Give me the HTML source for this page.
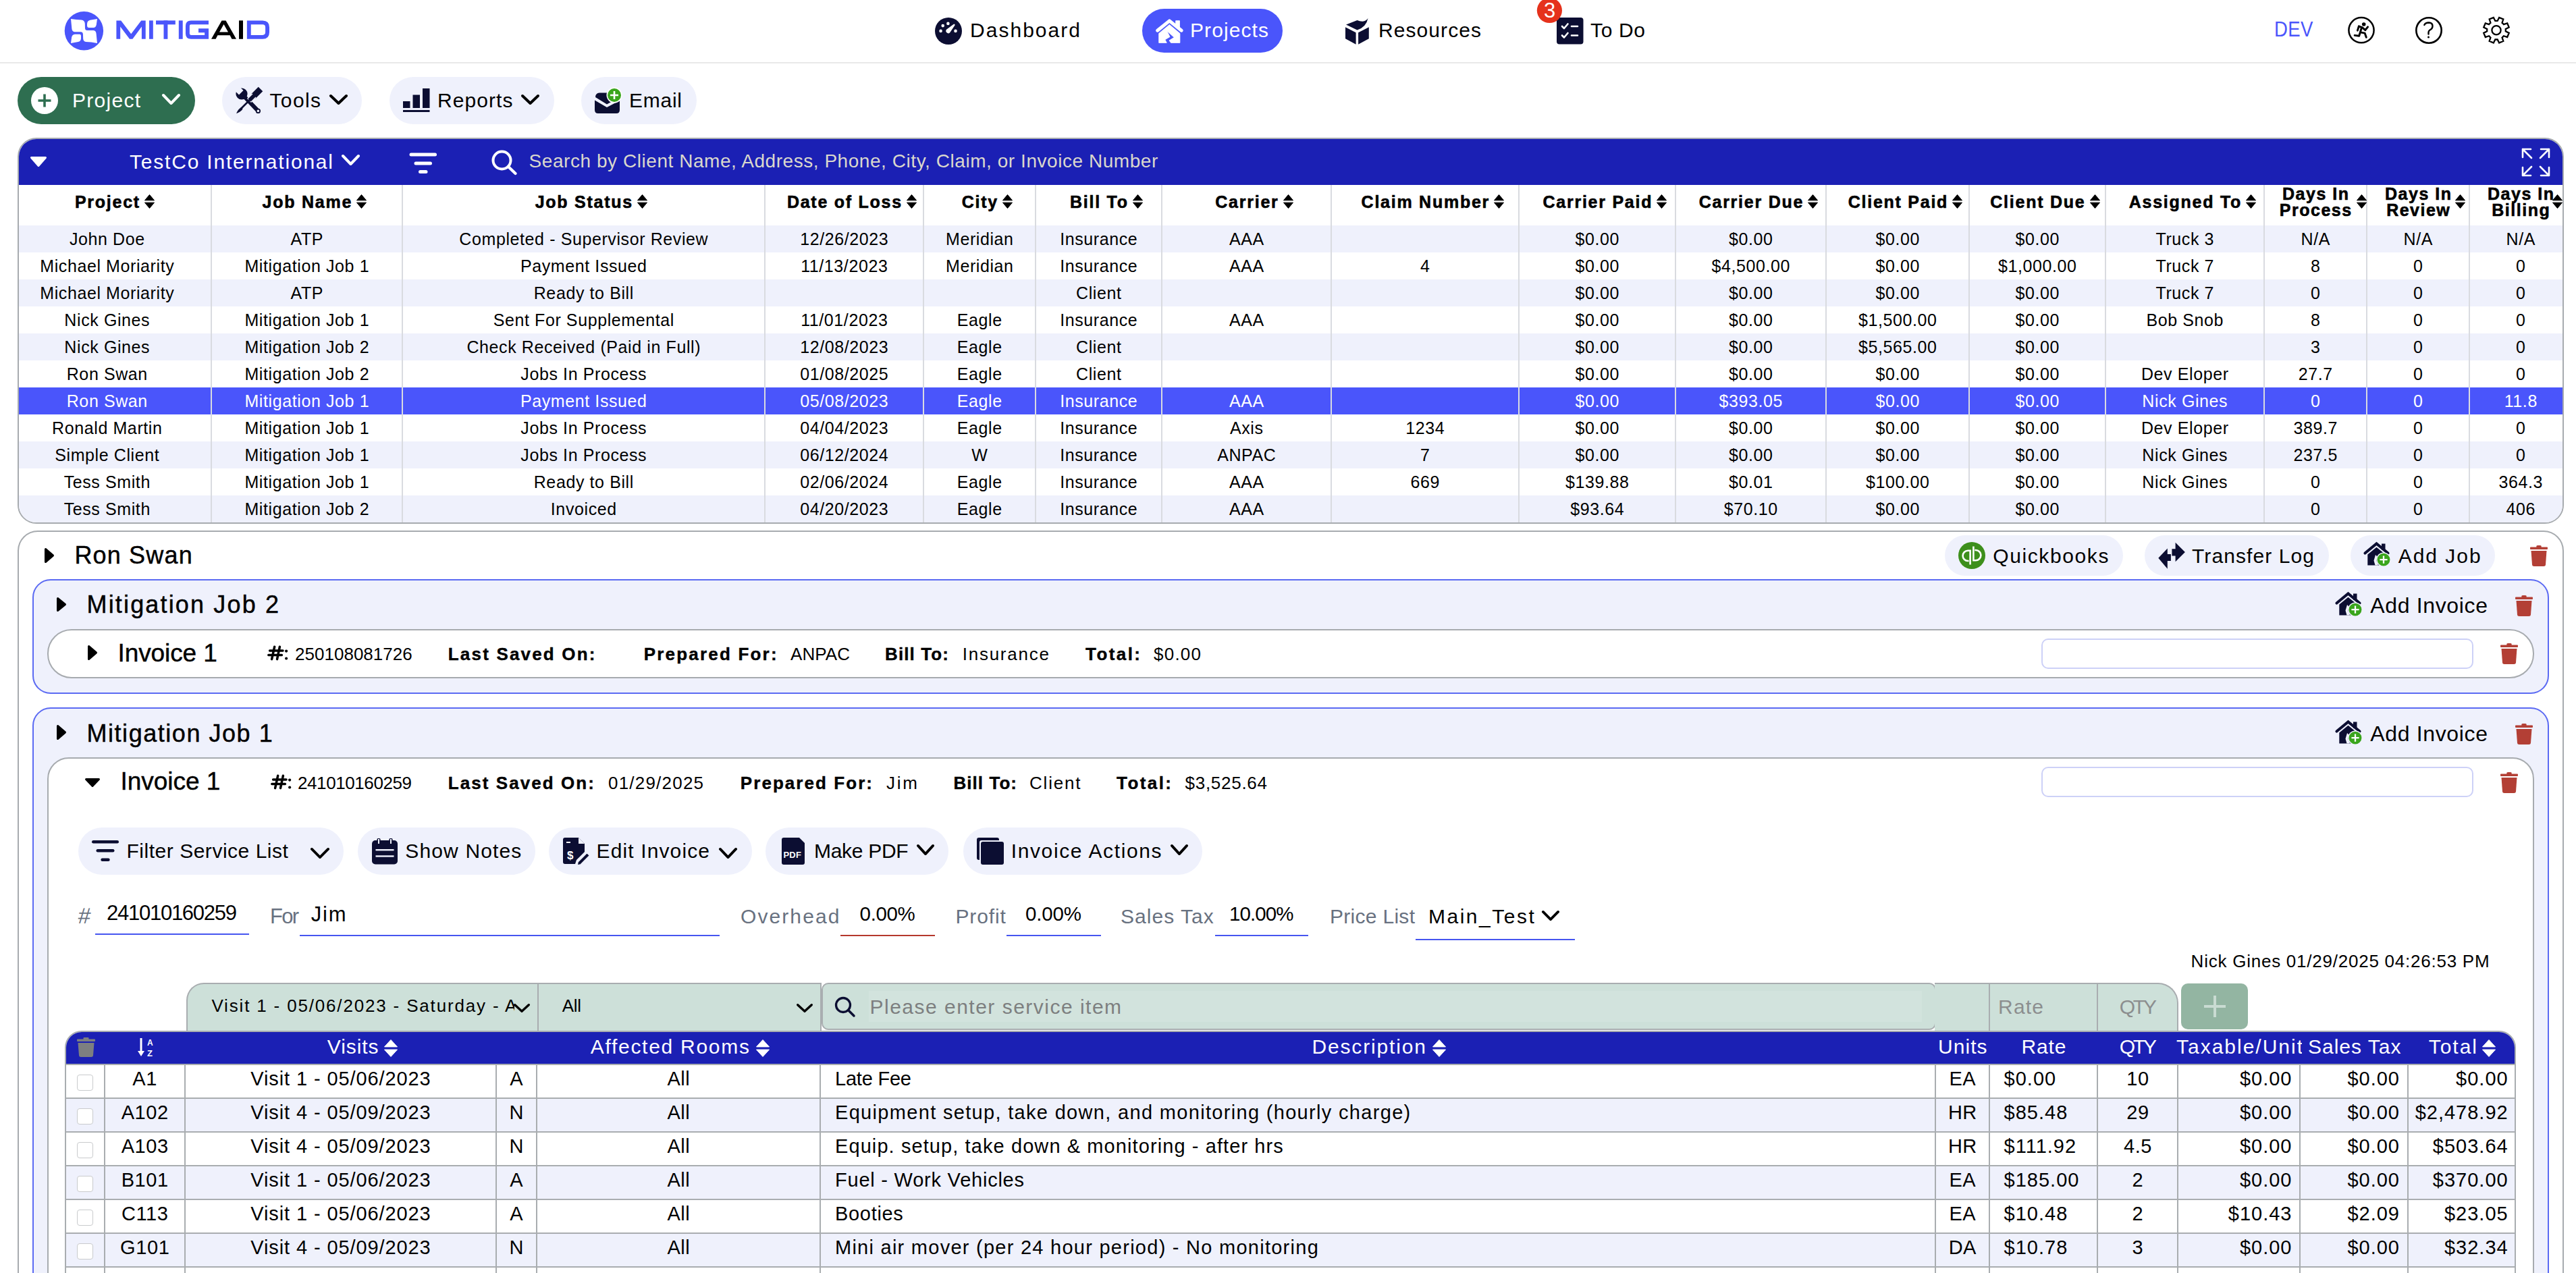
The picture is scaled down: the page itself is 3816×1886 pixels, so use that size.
<!DOCTYPE html><html><head><meta charset="utf-8"><style>
html,body{margin:0;padding:0;}
body{width:3816px;height:1886px;overflow:hidden;position:relative;background:#fff;font-family:"Liberation Sans",sans-serif;color:#000;}
.t{position:absolute;white-space:nowrap;}
.r{position:absolute;}
.s{position:absolute;overflow:visible;}
</style></head><body>
<div class="r" style="left:0px;top:92px;width:3816px;height:2px;background:#e9e9e9;border-radius:0px;box-sizing:border-box;"></div>
<svg class="s" style="left:92px;top:14px;" width="66" height="66" viewBox="0 0 66 66"><circle cx="32.4" cy="31.75" r="28.7" fill="#4a55fb"/><path d="M13 14 Q21 15.2 28.5 15.4 Q33.6 16 33.8 21 L34 28 Q34.2 30.8 37 31 L46.5 31.1 Q50.3 31.8 50.6 36 L52 50 Q43 48.2 35.2 48 Q31.5 47.2 31.2 43.5 L30.9 36.2 Q30.5 33.4 27.8 33.2 L18.3 33.2 Q14.8 32.6 14.4 28.8 Z" fill="#fff"/><path d="M52 14 L50.8 22.5 Q50 26.8 46.4 27 L39.4 27 Q37 26.8 37 24.2 L37 21.2 Q37.4 16.6 41.5 15.8 Z" fill="#fff"/><path d="M13 50 L14.1 41.3 Q15 37.2 18.9 36.8 L26.3 36.8 Q28 37 28 39 L28 43.2 Q27.6 47.4 23.7 48 Z" fill="#fff"/></svg>
<svg class="s" style="left:170px;top:28px;" width="232" height="32" viewBox="0 0 232 32"><g transform="translate(-170,-28)"><path d="M172.4 57.8 L172.4 30.4 L179.2 30.4 L194.2 50.2 L209.2 30.4 L215.7 30.4 L215.7 57.8 L209.9 57.8 L209.9 39.5 L196.4 57.8 L192 57.8 L178.2 39.5 L178.2 57.8 Z" fill="#4a55fb"/><rect x="221" y="30.4" width="5.8" height="27.4" fill="#4a55fb"/><rect x="231" y="30.4" width="28.8" height="5.9" fill="#4a55fb"/><rect x="242.5" y="30.4" width="5.9" height="27.4" fill="#4a55fb"/><rect x="264.8" y="30.4" width="5.9" height="27.4" fill="#4a55fb"/><path d="M309 33.35 L283 33.35 Q277.9 33.35 277.9 38.4 L277.9 49.8 Q277.9 54.85 283 54.85 L306.1 54.85 L306.1 45.3 L294 45.3" fill="none" stroke="#4a55fb" stroke-width="5.9"/><path d="M313 57.8 L328.5 30.4 L334.5 30.4 L350 57.8 L343.4 57.8 L340.6 52.3 L322.4 52.3 L319.6 57.8 Z M325 47.6 L338 47.6 L331.5 36 Z" fill="#000" fill-rule="evenodd"/><rect x="354" y="30.4" width="6" height="27.4" fill="#000"/><path d="M368.8 33.35 L389 33.35 Q396.05 33.35 396.05 40.4 L396.05 47.8 Q396.05 54.85 389 54.85 L368.8 54.85 Z" fill="none" stroke="#4a55fb" stroke-width="5.9"/></g></svg>
<svg class="s" style="left:1385px;top:26px;" width="40" height="40" viewBox="0 0 40 40"><circle cx="20" cy="20" r="20" fill="#0c0e32"/><circle cx="8.55" cy="19.9" r="2.3" fill="#fff"/><circle cx="11.7" cy="12.1" r="2.3" fill="#fff"/><circle cx="19.4" cy="8.9" r="2.3" fill="#fff"/><circle cx="30.5" cy="19.9" r="2.3" fill="#fff"/><path d="M17.0 17.7 L27.5 10.1 A1.2 1.2 0 0 1 29.3 11.7 L22.0 22.5 A3.5 3.5 0 0 1 17.0 17.7 Z" fill="#fff"/></svg>
<div class="t" style="left:1437.0px;top:24.3px;height:42px;line-height:42px;font-size:30px;color:#000;letter-spacing:2.03px;">Dashboard</div>
<div class="r" style="left:1692px;top:13px;width:208px;height:65px;background:#4a55fb;border-radius:33px;box-sizing:border-box;"></div>
<svg class="s" style="left:1700px;top:20px;" width="70" height="50" viewBox="0 0 70 50"><polyline points="14.6,25.2 32.4,10.9 50.2,25.2" fill="none" stroke="#fff" stroke-width="5" stroke-linecap="round" stroke-linejoin="round"/><rect x="41.2" y="10.2" width="6.7" height="11" rx="0.8" fill="#fff"/><path d="M16.7 43.4 L16.7 29.5 L32.4 16.5 L47.9 29.5 L47.9 43.4 L34.6 43.4 L32 40 L39.3 35.4 L28.9 26.1 L33 34.6 L25.9 38.7 L28.3 43.4 Z" fill="#fff" stroke="#fff" stroke-width="0.8" stroke-linejoin="round"/></svg>
<div class="t" style="left:1763.0px;top:24.3px;height:42px;line-height:42px;font-size:30px;color:#fff;letter-spacing:1.09px;">Projects</div>
<svg class="s" style="left:1993px;top:27px;" width="36" height="40" viewBox="0 0 36 40"><path d="M1 9.5 L17.5 3 Q21 4.8 25.4 4.8 Q31 4.2 33.5 0 Q31 13 17.5 17.6 Z" fill="#0c0e32"/><path d="M0 13.2 L15.6 21.3 L15.6 38.8 L0 30.3 Z" fill="#0c0e32"/><path d="M19.1 21.3 L34.8 13.2 L34.8 30.3 L19.1 38.8 Z" fill="#0c0e32"/></svg>
<div class="t" style="left:2042.0px;top:24.3px;height:42px;line-height:42px;font-size:30px;color:#000;letter-spacing:1.08px;">Resources</div>
<svg class="s" style="left:2306px;top:26px;" width="40" height="40" viewBox="0 0 40 40"><rect x="0" y="0" width="39.5" height="39.5" rx="4" fill="#0c0e32"/><path d="M8 13 L11 16 L16.5 9.5 M8 26.5 L11 29.5 L16.5 23" fill="none" stroke="#fff" stroke-width="2.6" stroke-linecap="round" stroke-linejoin="round"/><path d="M22 13 L31 13 M22 26.5 L31 26.5" stroke="#fff" stroke-width="2.6" stroke-linecap="round"/></svg>
<svg class="s" style="left:2276px;top:-4px;" width="38" height="38" viewBox="0 0 38 38"><circle cx="19.4" cy="19.5" r="18.6" fill="#e5321c"/></svg>
<div class="t" style="left:1295.6px;width:2000px;text-align:center;text-indent:0.00px;top:-5.7px;height:43px;line-height:43px;font-size:31px;color:#fff;letter-spacing:0.00px;">3</div>
<div class="t" style="left:2356.0px;top:24.3px;height:42px;line-height:42px;font-size:30px;color:#000;letter-spacing:0.66px;">To Do</div>
<div class="t" style="left:3369.0px;top:20.7px;height:45px;line-height:45px;font-size:32px;color:#4a55fb;letter-spacing:0.50px;transform:scaleX(0.86);transform-origin:0 0;">DEV</div>
<svg class="s" style="left:3478px;top:25px;" width="40" height="40" viewBox="0 0 40 40"><circle cx="20" cy="19.7" r="18.6" fill="none" stroke="#000" stroke-width="2.5"/><circle cx="23.7" cy="11" r="2.8" fill="#000"/><path d="M14.4 20.2 L16.3 13.8 L21.6 15.9 L25.8 19.7 L29.6 14.8" fill="none" stroke="#000" stroke-width="2.9" stroke-linecap="round" stroke-linejoin="round"/><path d="M20.6 15.5 L16.7 28.2 L10.1 27.4" fill="none" stroke="#000" stroke-width="2.9" stroke-linecap="round" stroke-linejoin="round"/><path d="M18.8 22.9 L25.2 24.2 L27.3 30.3" fill="none" stroke="#000" stroke-width="2.9" stroke-linecap="round" stroke-linejoin="round"/></svg>
<svg class="s" style="left:3578px;top:25px;" width="40" height="40" viewBox="0 0 40 40"><circle cx="20" cy="20" r="18.7" fill="none" stroke="#000" stroke-width="2.6"/><path d="M13.3 12 Q15 8.5 20 8.5 Q25.5 8.8 25.5 13.5 Q25.5 17.5 21.5 19.5 Q19.5 20.8 19.5 23 L19.5 25.5" fill="none" stroke="#000" stroke-width="2.4" stroke-linecap="round"/><circle cx="19.5" cy="30" r="1.5" fill="#000"/></svg>
<svg class="s" style="left:3678px;top:25px;" width="40" height="40" viewBox="0 0 40 40"><polygon points="11.35,8.82 11.44,8.75 9.68,3.51 15.84,0.96 18.31,5.90 18.43,5.89 21.57,5.89 21.69,5.90 24.16,0.96 30.32,3.51 28.56,8.75 28.65,8.82 30.88,11.05 30.95,11.14 36.19,9.38 38.74,15.54 33.80,18.01 33.81,18.13 33.81,21.27 33.80,21.39 38.74,23.86 36.19,30.02 30.95,28.26 30.88,28.35 28.65,30.58 28.56,30.65 30.32,35.89 24.16,38.44 21.69,33.50 21.57,33.51 18.43,33.51 18.31,33.50 15.84,38.44 9.68,35.89 11.44,30.65 11.35,30.58 9.12,28.35 9.05,28.26 3.81,30.02 1.26,23.86 6.20,21.39 6.19,21.27 6.19,18.13 6.20,18.01 1.26,15.54 3.81,9.38 9.05,11.14 9.12,11.05" fill="none" stroke="#000" stroke-width="2.3" stroke-linejoin="miter"/><circle cx="20" cy="19.7" r="6.6" fill="none" stroke="#000" stroke-width="2.3"/></svg>
<div class="r" style="left:26px;top:114px;width:263px;height:70px;background:#2e6e50;border-radius:35px;box-sizing:border-box;"></div>
<svg class="s" style="left:46px;top:129px;" width="40" height="40" viewBox="0 0 40 40"><circle cx="20" cy="20" r="20" fill="#fff"/><path d="M20 10.5 L20 29.5 M10.5 20 L29.5 20" stroke="#2e6e50" stroke-width="3.6"/></svg>
<div class="t" style="left:107.0px;top:127.6px;height:42px;line-height:42px;font-size:30px;color:#fff;letter-spacing:1.27px;">Project</div>
<svg class="s" style="left:240px;top:139px;" width="27" height="16" viewBox="0 0 27 16"><polyline points="2.0,2.0 13.5,14.0 25.0,2.0" fill="none" stroke="#fff" stroke-width="4" stroke-linecap="round" stroke-linejoin="round"/></svg>
<div class="r" style="left:329px;top:114px;width:207px;height:70px;background:#eff1fc;border-radius:35px;box-sizing:border-box;"></div>
<svg class="s" style="left:349px;top:129px;" width="40" height="40" viewBox="0 0 40 40"><path d="M9 10 L33.4 35.4" stroke="#0c0e32" stroke-width="6" stroke-linecap="round"/><circle cx="33.4" cy="35.4" r="3.6" fill="#0c0e32"/><circle cx="9" cy="10" r="8.6" fill="#0c0e32"/><path d="M-1.5 5 L5 11.5 L11.5 5 L5 -1.5 Z" fill="#eff1fc"/><circle cx="33.4" cy="35.4" r="1.8" fill="#eff1fc"/><path d="M37 3 L26.5 13.5" stroke="#0c0e32" stroke-width="9.2"/><path d="M27.5 12.5 L20 20" stroke="#eff1fc" stroke-width="8.4"/><path d="M28 12 L20.5 19.5" stroke="#0c0e32" stroke-width="5.8"/><path d="M21.5 18.5 L8 32" stroke="#0c0e32" stroke-width="2.6"/><path d="M1.2 39.3 Q3 33.5 7.5 30.5 Q9.5 29.8 10.3 31.2 Q10.8 33 9 34.6 Q5.5 38 1.2 39.3 Z" fill="#0c0e32"/></svg>
<div class="t" style="left:399.5px;top:127.6px;height:42px;line-height:42px;font-size:30px;color:#000;letter-spacing:1.37px;">Tools</div>
<svg class="s" style="left:488px;top:140px;" width="27" height="15" viewBox="0 0 27 15"><polyline points="2.0,2.0 13.5,13.0 25.0,2.0" fill="none" stroke="#000" stroke-width="4" stroke-linecap="round" stroke-linejoin="round"/></svg>
<div class="r" style="left:577px;top:114px;width:244px;height:70px;background:#eff1fc;border-radius:35px;box-sizing:border-box;"></div>
<svg class="s" style="left:597px;top:131px;" width="41" height="36" viewBox="0 0 41 36"><rect x="0" y="19" width="10.5" height="10" fill="#0c0e32"/><rect x="14.5" y="9.5" width="10.5" height="19.5" fill="#0c0e32"/><rect x="29" y="0" width="10.5" height="29" fill="#0c0e32"/><rect x="0" y="32" width="39.5" height="3" fill="#0c0e32"/></svg>
<div class="t" style="left:648.0px;top:127.6px;height:42px;line-height:42px;font-size:30px;color:#000;letter-spacing:1.08px;">Reports</div>
<svg class="s" style="left:772px;top:140px;" width="27" height="15" viewBox="0 0 27 15"><polyline points="2.0,2.0 13.5,13.0 25.0,2.0" fill="none" stroke="#000" stroke-width="4" stroke-linecap="round" stroke-linejoin="round"/></svg>
<div class="r" style="left:861px;top:114px;width:171px;height:70px;background:#eff1fc;border-radius:35px;box-sizing:border-box;"></div>
<svg class="s" style="left:880px;top:130px;" width="42" height="40" viewBox="0 0 42 40"><path d="M2 14 Q2 8 8 7.5 L24 7.5 Q22 14 28 19.5 L19 24.5 L2 14 Z" fill="#0c0e32"/><path d="M1 18.5 L19 29 L38 19 L38 33 Q38 38 33 38 L6 38 Q1 38 1 33 Z" fill="#0c0e32"/><circle cx="30" cy="11" r="11.5" fill="#fff"/><circle cx="30" cy="11" r="10" fill="#3aa51c"/><path d="M30 5 L30 17 M24 11 L36 11" stroke="#fff" stroke-width="2.6"/></svg>
<div class="t" style="left:932.0px;top:127.6px;height:42px;line-height:42px;font-size:30px;color:#000;letter-spacing:0.75px;">Email</div>
<div class="r" style="left:26px;top:204px;width:3772px;height:572px;background:#fff;border-radius:28px;box-sizing:border-box;border:2px solid #a7abaf;"></div>
<div class="r" style="left:28px;top:206px;width:3768px;height:68px;background:#1b20b4;border-radius:0px;box-sizing:border-box;border-radius:26px 26px 0 0;"></div>
<svg class="s" style="left:45px;top:232px;" width="24" height="15" viewBox="0 0 24 15"><path d="M1.5 1.5 L22.5 1.5 L12.0 13.5 Z" fill="#fff" stroke="#fff" stroke-width="3" stroke-linejoin="round"/></svg>
<div class="t" style="left:192.0px;top:219.2px;height:42px;line-height:42px;font-size:30px;color:#fff;letter-spacing:1.80px;">TestCo International</div>
<svg class="s" style="left:506px;top:229px;" width="27" height="16" viewBox="0 0 27 16"><polyline points="2.0,2.0 13.5,14.0 25.0,2.0" fill="none" stroke="#fff" stroke-width="4" stroke-linecap="round" stroke-linejoin="round"/></svg>
<svg class="s" style="left:606px;top:225px;" width="42" height="32" viewBox="0 0 42 32"><rect x="0.5" y="1.5" width="40.5" height="5" rx="2.5" fill="#fff"/><rect x="7.5" y="14.5" width="26.5" height="5" rx="2.5" fill="#fff"/><rect x="14" y="27" width="13.5" height="5" rx="2.5" fill="#fff"/></svg>
<svg class="s" style="left:727px;top:221px;" width="40" height="38" viewBox="0 0 40 38"><circle cx="16.5" cy="16.5" r="13" fill="none" stroke="#fff" stroke-width="4"/><path d="M26 26 L36.5 36" stroke="#fff" stroke-width="4.2" stroke-linecap="round"/></svg>
<div class="t" style="left:783.6px;top:218.6px;height:39px;line-height:39px;font-size:28px;color:#dad8cd;letter-spacing:0.55px;">Search by Client Name, Address, Phone, City, Claim, or Invoice Number</div>
<svg class="s" style="left:3735px;top:219px;" width="43" height="43" viewBox="0 0 43 43"><g fill="none" stroke="#fff" stroke-width="2.6" stroke-linecap="round" stroke-linejoin="round"><path d="M2 14 L2 2 L14 2 M2 2 L15 15"/><path d="M29 2 L41 2 L41 14 M41 2 L28 15"/><path d="M2 29 L2 41 L14 41 M2 41 L15 28"/><path d="M41 29 L41 41 L29 41 M41 41 L28 28"/></g></svg>
<div class="r" style="left:28px;top:334px;width:3768px;height:40px;background:#eff1fc;border-radius:0px;box-sizing:border-box;"></div>
<div class="r" style="left:28px;top:374px;width:3768px;height:40px;background:#fff;border-radius:0px;box-sizing:border-box;"></div>
<div class="r" style="left:28px;top:414px;width:3768px;height:40px;background:#eff1fc;border-radius:0px;box-sizing:border-box;"></div>
<div class="r" style="left:28px;top:454px;width:3768px;height:40px;background:#fff;border-radius:0px;box-sizing:border-box;"></div>
<div class="r" style="left:28px;top:494px;width:3768px;height:40px;background:#eff1fc;border-radius:0px;box-sizing:border-box;"></div>
<div class="r" style="left:28px;top:534px;width:3768px;height:40px;background:#fff;border-radius:0px;box-sizing:border-box;"></div>
<div class="r" style="left:28px;top:574px;width:3768px;height:40px;background:#4a55fb;border-radius:0px;box-sizing:border-box;"></div>
<div class="r" style="left:28px;top:614px;width:3768px;height:40px;background:#fff;border-radius:0px;box-sizing:border-box;"></div>
<div class="r" style="left:28px;top:654px;width:3768px;height:40px;background:#eff1fc;border-radius:0px;box-sizing:border-box;"></div>
<div class="r" style="left:28px;top:694px;width:3768px;height:40px;background:#fff;border-radius:0px;box-sizing:border-box;"></div>
<div class="r" style="left:28px;top:734px;width:3768px;height:40px;background:#eff1fc;border-radius:0px;box-sizing:border-box;border-radius:0 0 26px 26px;"></div>
<div class="r" style="left:312px;top:274px;width:2px;height:500px;background:#d9dbe0;border-radius:0px;box-sizing:border-box;"></div>
<div class="r" style="left:595px;top:274px;width:2px;height:500px;background:#d9dbe0;border-radius:0px;box-sizing:border-box;"></div>
<div class="r" style="left:1132px;top:274px;width:2px;height:500px;background:#d9dbe0;border-radius:0px;box-sizing:border-box;"></div>
<div class="r" style="left:1367px;top:274px;width:2px;height:500px;background:#d9dbe0;border-radius:0px;box-sizing:border-box;"></div>
<div class="r" style="left:1533px;top:274px;width:2px;height:500px;background:#d9dbe0;border-radius:0px;box-sizing:border-box;"></div>
<div class="r" style="left:1720px;top:274px;width:2px;height:500px;background:#d9dbe0;border-radius:0px;box-sizing:border-box;"></div>
<div class="r" style="left:1971px;top:274px;width:2px;height:500px;background:#d9dbe0;border-radius:0px;box-sizing:border-box;"></div>
<div class="r" style="left:2249px;top:274px;width:2px;height:500px;background:#d9dbe0;border-radius:0px;box-sizing:border-box;"></div>
<div class="r" style="left:2481px;top:274px;width:2px;height:500px;background:#d9dbe0;border-radius:0px;box-sizing:border-box;"></div>
<div class="r" style="left:2704px;top:274px;width:2px;height:500px;background:#d9dbe0;border-radius:0px;box-sizing:border-box;"></div>
<div class="r" style="left:2916px;top:274px;width:2px;height:500px;background:#d9dbe0;border-radius:0px;box-sizing:border-box;"></div>
<div class="r" style="left:3118px;top:274px;width:2px;height:500px;background:#d9dbe0;border-radius:0px;box-sizing:border-box;"></div>
<div class="r" style="left:3353px;top:274px;width:2px;height:500px;background:#d9dbe0;border-radius:0px;box-sizing:border-box;"></div>
<div class="r" style="left:3505px;top:274px;width:2px;height:500px;background:#d9dbe0;border-radius:0px;box-sizing:border-box;"></div>
<div class="r" style="left:3657px;top:274px;width:2px;height:500px;background:#d9dbe0;border-radius:0px;box-sizing:border-box;"></div>
<div class="t" style="left:110.9px;top:282.1px;height:35px;line-height:35px;font-size:25px;color:#000;letter-spacing:1.75px;font-weight:700;-webkit-text-stroke:0.6px #000;">Project</div>
<svg class="s" style="left:214.1279296875px;top:287.5px;" width="15" height="21" viewBox="0 0 15 21"><path d="M7.5 0.5 L14.5 8.82 L0.5 8.82 Z M0.5 12.18 L14.5 12.18 L7.5 20.5 Z" fill="#000" stroke="#000" stroke-width="1" stroke-linejoin="round"/></svg>
<div class="t" style="left:388.6px;top:282.1px;height:35px;line-height:35px;font-size:25px;color:#000;letter-spacing:1.75px;font-weight:700;-webkit-text-stroke:0.6px #000;">Job Name</div>
<svg class="s" style="left:528.3671875px;top:287.5px;" width="15" height="21" viewBox="0 0 15 21"><path d="M7.5 0.5 L14.5 8.82 L0.5 8.82 Z M0.5 12.18 L14.5 12.18 L7.5 20.5 Z" fill="#000" stroke="#000" stroke-width="1" stroke-linejoin="round"/></svg>
<div class="t" style="left:792.7px;top:282.1px;height:35px;line-height:35px;font-size:25px;color:#000;letter-spacing:1.75px;font-weight:700;-webkit-text-stroke:0.6px #000;">Job Status</div>
<svg class="s" style="left:944.275390625px;top:287.5px;" width="15" height="21" viewBox="0 0 15 21"><path d="M7.5 0.5 L14.5 8.82 L0.5 8.82 Z M0.5 12.18 L14.5 12.18 L7.5 20.5 Z" fill="#000" stroke="#000" stroke-width="1" stroke-linejoin="round"/></svg>
<div class="t" style="left:1165.9px;top:282.1px;height:35px;line-height:35px;font-size:25px;color:#000;letter-spacing:1.75px;font-weight:700;-webkit-text-stroke:0.6px #000;">Date of Loss</div>
<svg class="s" style="left:1343.1396484375px;top:287.5px;" width="15" height="21" viewBox="0 0 15 21"><path d="M7.5 0.5 L14.5 8.82 L0.5 8.82 Z M0.5 12.18 L14.5 12.18 L7.5 20.5 Z" fill="#000" stroke="#000" stroke-width="1" stroke-linejoin="round"/></svg>
<div class="t" style="left:1424.8px;top:282.1px;height:35px;line-height:35px;font-size:25px;color:#000;letter-spacing:1.75px;font-weight:700;-webkit-text-stroke:0.6px #000;">City</div>
<svg class="s" style="left:1485.240234375px;top:287.5px;" width="15" height="21" viewBox="0 0 15 21"><path d="M7.5 0.5 L14.5 8.82 L0.5 8.82 Z M0.5 12.18 L14.5 12.18 L7.5 20.5 Z" fill="#000" stroke="#000" stroke-width="1" stroke-linejoin="round"/></svg>
<div class="t" style="left:1585.0px;top:282.1px;height:35px;line-height:35px;font-size:25px;color:#000;letter-spacing:1.75px;font-weight:700;-webkit-text-stroke:0.6px #000;">Bill To</div>
<svg class="s" style="left:1678.01171875px;top:287.5px;" width="15" height="21" viewBox="0 0 15 21"><path d="M7.5 0.5 L14.5 8.82 L0.5 8.82 Z M0.5 12.18 L14.5 12.18 L7.5 20.5 Z" fill="#000" stroke="#000" stroke-width="1" stroke-linejoin="round"/></svg>
<div class="t" style="left:1800.3px;top:282.1px;height:35px;line-height:35px;font-size:25px;color:#000;letter-spacing:1.75px;font-weight:700;-webkit-text-stroke:0.6px #000;">Carrier</div>
<svg class="s" style="left:1900.7470703125px;top:287.5px;" width="15" height="21" viewBox="0 0 15 21"><path d="M7.5 0.5 L14.5 8.82 L0.5 8.82 Z M0.5 12.18 L14.5 12.18 L7.5 20.5 Z" fill="#000" stroke="#000" stroke-width="1" stroke-linejoin="round"/></svg>
<div class="t" style="left:2016.6px;top:282.1px;height:35px;line-height:35px;font-size:25px;color:#000;letter-spacing:1.75px;font-weight:700;-webkit-text-stroke:0.6px #000;">Claim Number</div>
<svg class="s" style="left:2213.3662109375px;top:287.5px;" width="15" height="21" viewBox="0 0 15 21"><path d="M7.5 0.5 L14.5 8.82 L0.5 8.82 Z M0.5 12.18 L14.5 12.18 L7.5 20.5 Z" fill="#000" stroke="#000" stroke-width="1" stroke-linejoin="round"/></svg>
<div class="t" style="left:2285.5px;top:282.1px;height:35px;line-height:35px;font-size:25px;color:#000;letter-spacing:1.75px;font-weight:700;-webkit-text-stroke:0.6px #000;">Carrier Paid</div>
<svg class="s" style="left:2454.4931640625px;top:287.5px;" width="15" height="21" viewBox="0 0 15 21"><path d="M7.5 0.5 L14.5 8.82 L0.5 8.82 Z M0.5 12.18 L14.5 12.18 L7.5 20.5 Z" fill="#000" stroke="#000" stroke-width="1" stroke-linejoin="round"/></svg>
<div class="t" style="left:2516.7px;top:282.1px;height:35px;line-height:35px;font-size:25px;color:#000;letter-spacing:1.75px;font-weight:700;-webkit-text-stroke:0.6px #000;">Carrier Due</div>
<svg class="s" style="left:2678.3349609375px;top:287.5px;" width="15" height="21" viewBox="0 0 15 21"><path d="M7.5 0.5 L14.5 8.82 L0.5 8.82 Z M0.5 12.18 L14.5 12.18 L7.5 20.5 Z" fill="#000" stroke="#000" stroke-width="1" stroke-linejoin="round"/></svg>
<div class="t" style="left:2737.7px;top:282.1px;height:35px;line-height:35px;font-size:25px;color:#000;letter-spacing:1.75px;font-weight:700;-webkit-text-stroke:0.6px #000;">Client Paid</div>
<svg class="s" style="left:2892.3447265625px;top:287.5px;" width="15" height="21" viewBox="0 0 15 21"><path d="M7.5 0.5 L14.5 8.82 L0.5 8.82 Z M0.5 12.18 L14.5 12.18 L7.5 20.5 Z" fill="#000" stroke="#000" stroke-width="1" stroke-linejoin="round"/></svg>
<div class="t" style="left:2948.3px;top:282.1px;height:35px;line-height:35px;font-size:25px;color:#000;letter-spacing:1.75px;font-weight:700;-webkit-text-stroke:0.6px #000;">Client Due</div>
<svg class="s" style="left:3095.6865234375px;top:287.5px;" width="15" height="21" viewBox="0 0 15 21"><path d="M7.5 0.5 L14.5 8.82 L0.5 8.82 Z M0.5 12.18 L14.5 12.18 L7.5 20.5 Z" fill="#000" stroke="#000" stroke-width="1" stroke-linejoin="round"/></svg>
<div class="t" style="left:3153.7px;top:282.1px;height:35px;line-height:35px;font-size:25px;color:#000;letter-spacing:1.75px;font-weight:700;-webkit-text-stroke:0.6px #000;">Assigned To</div>
<svg class="s" style="left:3327.330078125px;top:287.5px;" width="15" height="21" viewBox="0 0 15 21"><path d="M7.5 0.5 L14.5 8.82 L0.5 8.82 Z M0.5 12.18 L14.5 12.18 L7.5 20.5 Z" fill="#000" stroke="#000" stroke-width="1" stroke-linejoin="round"/></svg>
<div class="t" style="left:2430.0px;width:2000px;text-align:center;text-indent:1.50px;top:269.7px;height:35px;line-height:35px;font-size:25px;color:#000;letter-spacing:1.50px;font-weight:700;-webkit-text-stroke:0.6px #000;">Days In</div>
<div class="t" style="left:2430.0px;width:2000px;text-align:center;text-indent:1.50px;top:293.5px;height:35px;line-height:35px;font-size:25px;color:#000;letter-spacing:1.50px;font-weight:700;-webkit-text-stroke:0.6px #000;">Process</div>
<svg class="s" style="left:3491px;top:287.5px;" width="15" height="21" viewBox="0 0 15 21"><path d="M7.5 0.5 L14.5 8.82 L0.5 8.82 Z M0.5 12.18 L14.5 12.18 L7.5 20.5 Z" fill="#000" stroke="#000" stroke-width="1" stroke-linejoin="round"/></svg>
<div class="t" style="left:2582.0px;width:2000px;text-align:center;text-indent:1.50px;top:269.7px;height:35px;line-height:35px;font-size:25px;color:#000;letter-spacing:1.50px;font-weight:700;-webkit-text-stroke:0.6px #000;">Days In</div>
<div class="t" style="left:2582.0px;width:2000px;text-align:center;text-indent:1.50px;top:293.5px;height:35px;line-height:35px;font-size:25px;color:#000;letter-spacing:1.50px;font-weight:700;-webkit-text-stroke:0.6px #000;">Review</div>
<svg class="s" style="left:3637px;top:287.5px;" width="15" height="21" viewBox="0 0 15 21"><path d="M7.5 0.5 L14.5 8.82 L0.5 8.82 Z M0.5 12.18 L14.5 12.18 L7.5 20.5 Z" fill="#000" stroke="#000" stroke-width="1" stroke-linejoin="round"/></svg>
<div class="t" style="left:2734.0px;width:2000px;text-align:center;text-indent:1.50px;top:269.7px;height:35px;line-height:35px;font-size:25px;color:#000;letter-spacing:1.50px;font-weight:700;-webkit-text-stroke:0.6px #000;">Days In</div>
<div class="t" style="left:2734.0px;width:2000px;text-align:center;text-indent:1.50px;top:293.5px;height:35px;line-height:35px;font-size:25px;color:#000;letter-spacing:1.50px;font-weight:700;-webkit-text-stroke:0.6px #000;">Billing</div>
<svg class="s" style="left:3781px;top:287.5px;" width="15" height="21" viewBox="0 0 15 21"><path d="M7.5 0.5 L14.5 8.82 L0.5 8.82 Z M0.5 12.18 L14.5 12.18 L7.5 20.5 Z" fill="#000" stroke="#000" stroke-width="1" stroke-linejoin="round"/></svg>
<div class="t" style="left:-841.5px;width:2000px;text-align:center;text-indent:0.60px;top:336.5px;height:35px;line-height:35px;font-size:25px;color:#000;letter-spacing:0.60px;">John Doe</div>
<div class="t" style="left:-545.5px;width:2000px;text-align:center;text-indent:0.60px;top:336.5px;height:35px;line-height:35px;font-size:25px;color:#000;letter-spacing:0.60px;">ATP</div>
<div class="t" style="left:-135.5px;width:2000px;text-align:center;text-indent:0.60px;top:336.5px;height:35px;line-height:35px;font-size:25px;color:#000;letter-spacing:0.60px;">Completed - Supervisor Review</div>
<div class="t" style="left:250.5px;width:2000px;text-align:center;text-indent:0.60px;top:336.5px;height:35px;line-height:35px;font-size:25px;color:#000;letter-spacing:0.60px;">12/26/2023</div>
<div class="t" style="left:451.0px;width:2000px;text-align:center;text-indent:0.60px;top:336.5px;height:35px;line-height:35px;font-size:25px;color:#000;letter-spacing:0.60px;">Meridian</div>
<div class="t" style="left:627.5px;width:2000px;text-align:center;text-indent:0.60px;top:336.5px;height:35px;line-height:35px;font-size:25px;color:#000;letter-spacing:0.60px;">Insurance</div>
<div class="t" style="left:846.5px;width:2000px;text-align:center;text-indent:0.60px;top:336.5px;height:35px;line-height:35px;font-size:25px;color:#000;letter-spacing:0.60px;">AAA</div>
<div class="t" style="left:1366.0px;width:2000px;text-align:center;text-indent:0.60px;top:336.5px;height:35px;line-height:35px;font-size:25px;color:#000;letter-spacing:0.60px;">$0.00</div>
<div class="t" style="left:1593.5px;width:2000px;text-align:center;text-indent:0.60px;top:336.5px;height:35px;line-height:35px;font-size:25px;color:#000;letter-spacing:0.60px;">$0.00</div>
<div class="t" style="left:1811.0px;width:2000px;text-align:center;text-indent:0.60px;top:336.5px;height:35px;line-height:35px;font-size:25px;color:#000;letter-spacing:0.60px;">$0.00</div>
<div class="t" style="left:2018.0px;width:2000px;text-align:center;text-indent:0.60px;top:336.5px;height:35px;line-height:35px;font-size:25px;color:#000;letter-spacing:0.60px;">$0.00</div>
<div class="t" style="left:2236.5px;width:2000px;text-align:center;text-indent:0.60px;top:336.5px;height:35px;line-height:35px;font-size:25px;color:#000;letter-spacing:0.60px;">Truck 3</div>
<div class="t" style="left:2430.0px;width:2000px;text-align:center;text-indent:0.60px;top:336.5px;height:35px;line-height:35px;font-size:25px;color:#000;letter-spacing:0.60px;">N/A</div>
<div class="t" style="left:2582.0px;width:2000px;text-align:center;text-indent:0.60px;top:336.5px;height:35px;line-height:35px;font-size:25px;color:#000;letter-spacing:0.60px;">N/A</div>
<div class="t" style="left:2734.0px;width:2000px;text-align:center;text-indent:0.60px;top:336.5px;height:35px;line-height:35px;font-size:25px;color:#000;letter-spacing:0.60px;">N/A</div>
<div class="t" style="left:-841.5px;width:2000px;text-align:center;text-indent:0.60px;top:376.5px;height:35px;line-height:35px;font-size:25px;color:#000;letter-spacing:0.60px;">Michael Moriarity</div>
<div class="t" style="left:-545.5px;width:2000px;text-align:center;text-indent:0.60px;top:376.5px;height:35px;line-height:35px;font-size:25px;color:#000;letter-spacing:0.60px;">Mitigation Job 1</div>
<div class="t" style="left:-135.5px;width:2000px;text-align:center;text-indent:0.60px;top:376.5px;height:35px;line-height:35px;font-size:25px;color:#000;letter-spacing:0.60px;">Payment Issued</div>
<div class="t" style="left:250.5px;width:2000px;text-align:center;text-indent:0.60px;top:376.5px;height:35px;line-height:35px;font-size:25px;color:#000;letter-spacing:0.60px;">11/13/2023</div>
<div class="t" style="left:451.0px;width:2000px;text-align:center;text-indent:0.60px;top:376.5px;height:35px;line-height:35px;font-size:25px;color:#000;letter-spacing:0.60px;">Meridian</div>
<div class="t" style="left:627.5px;width:2000px;text-align:center;text-indent:0.60px;top:376.5px;height:35px;line-height:35px;font-size:25px;color:#000;letter-spacing:0.60px;">Insurance</div>
<div class="t" style="left:846.5px;width:2000px;text-align:center;text-indent:0.60px;top:376.5px;height:35px;line-height:35px;font-size:25px;color:#000;letter-spacing:0.60px;">AAA</div>
<div class="t" style="left:1111.0px;width:2000px;text-align:center;text-indent:0.60px;top:376.5px;height:35px;line-height:35px;font-size:25px;color:#000;letter-spacing:0.60px;">4</div>
<div class="t" style="left:1366.0px;width:2000px;text-align:center;text-indent:0.60px;top:376.5px;height:35px;line-height:35px;font-size:25px;color:#000;letter-spacing:0.60px;">$0.00</div>
<div class="t" style="left:1593.5px;width:2000px;text-align:center;text-indent:0.60px;top:376.5px;height:35px;line-height:35px;font-size:25px;color:#000;letter-spacing:0.60px;">$4,500.00</div>
<div class="t" style="left:1811.0px;width:2000px;text-align:center;text-indent:0.60px;top:376.5px;height:35px;line-height:35px;font-size:25px;color:#000;letter-spacing:0.60px;">$0.00</div>
<div class="t" style="left:2018.0px;width:2000px;text-align:center;text-indent:0.60px;top:376.5px;height:35px;line-height:35px;font-size:25px;color:#000;letter-spacing:0.60px;">$1,000.00</div>
<div class="t" style="left:2236.5px;width:2000px;text-align:center;text-indent:0.60px;top:376.5px;height:35px;line-height:35px;font-size:25px;color:#000;letter-spacing:0.60px;">Truck 7</div>
<div class="t" style="left:2430.0px;width:2000px;text-align:center;text-indent:0.60px;top:376.5px;height:35px;line-height:35px;font-size:25px;color:#000;letter-spacing:0.60px;">8</div>
<div class="t" style="left:2582.0px;width:2000px;text-align:center;text-indent:0.60px;top:376.5px;height:35px;line-height:35px;font-size:25px;color:#000;letter-spacing:0.60px;">0</div>
<div class="t" style="left:2734.0px;width:2000px;text-align:center;text-indent:0.60px;top:376.5px;height:35px;line-height:35px;font-size:25px;color:#000;letter-spacing:0.60px;">0</div>
<div class="t" style="left:-841.5px;width:2000px;text-align:center;text-indent:0.60px;top:416.5px;height:35px;line-height:35px;font-size:25px;color:#000;letter-spacing:0.60px;">Michael Moriarity</div>
<div class="t" style="left:-545.5px;width:2000px;text-align:center;text-indent:0.60px;top:416.5px;height:35px;line-height:35px;font-size:25px;color:#000;letter-spacing:0.60px;">ATP</div>
<div class="t" style="left:-135.5px;width:2000px;text-align:center;text-indent:0.60px;top:416.5px;height:35px;line-height:35px;font-size:25px;color:#000;letter-spacing:0.60px;">Ready to Bill</div>
<div class="t" style="left:627.5px;width:2000px;text-align:center;text-indent:0.60px;top:416.5px;height:35px;line-height:35px;font-size:25px;color:#000;letter-spacing:0.60px;">Client</div>
<div class="t" style="left:1366.0px;width:2000px;text-align:center;text-indent:0.60px;top:416.5px;height:35px;line-height:35px;font-size:25px;color:#000;letter-spacing:0.60px;">$0.00</div>
<div class="t" style="left:1593.5px;width:2000px;text-align:center;text-indent:0.60px;top:416.5px;height:35px;line-height:35px;font-size:25px;color:#000;letter-spacing:0.60px;">$0.00</div>
<div class="t" style="left:1811.0px;width:2000px;text-align:center;text-indent:0.60px;top:416.5px;height:35px;line-height:35px;font-size:25px;color:#000;letter-spacing:0.60px;">$0.00</div>
<div class="t" style="left:2018.0px;width:2000px;text-align:center;text-indent:0.60px;top:416.5px;height:35px;line-height:35px;font-size:25px;color:#000;letter-spacing:0.60px;">$0.00</div>
<div class="t" style="left:2236.5px;width:2000px;text-align:center;text-indent:0.60px;top:416.5px;height:35px;line-height:35px;font-size:25px;color:#000;letter-spacing:0.60px;">Truck 7</div>
<div class="t" style="left:2430.0px;width:2000px;text-align:center;text-indent:0.60px;top:416.5px;height:35px;line-height:35px;font-size:25px;color:#000;letter-spacing:0.60px;">0</div>
<div class="t" style="left:2582.0px;width:2000px;text-align:center;text-indent:0.60px;top:416.5px;height:35px;line-height:35px;font-size:25px;color:#000;letter-spacing:0.60px;">0</div>
<div class="t" style="left:2734.0px;width:2000px;text-align:center;text-indent:0.60px;top:416.5px;height:35px;line-height:35px;font-size:25px;color:#000;letter-spacing:0.60px;">0</div>
<div class="t" style="left:-841.5px;width:2000px;text-align:center;text-indent:0.60px;top:456.5px;height:35px;line-height:35px;font-size:25px;color:#000;letter-spacing:0.60px;">Nick Gines</div>
<div class="t" style="left:-545.5px;width:2000px;text-align:center;text-indent:0.60px;top:456.5px;height:35px;line-height:35px;font-size:25px;color:#000;letter-spacing:0.60px;">Mitigation Job 1</div>
<div class="t" style="left:-135.5px;width:2000px;text-align:center;text-indent:0.60px;top:456.5px;height:35px;line-height:35px;font-size:25px;color:#000;letter-spacing:0.60px;">Sent For Supplemental</div>
<div class="t" style="left:250.5px;width:2000px;text-align:center;text-indent:0.60px;top:456.5px;height:35px;line-height:35px;font-size:25px;color:#000;letter-spacing:0.60px;">11/01/2023</div>
<div class="t" style="left:451.0px;width:2000px;text-align:center;text-indent:0.60px;top:456.5px;height:35px;line-height:35px;font-size:25px;color:#000;letter-spacing:0.60px;">Eagle</div>
<div class="t" style="left:627.5px;width:2000px;text-align:center;text-indent:0.60px;top:456.5px;height:35px;line-height:35px;font-size:25px;color:#000;letter-spacing:0.60px;">Insurance</div>
<div class="t" style="left:846.5px;width:2000px;text-align:center;text-indent:0.60px;top:456.5px;height:35px;line-height:35px;font-size:25px;color:#000;letter-spacing:0.60px;">AAA</div>
<div class="t" style="left:1366.0px;width:2000px;text-align:center;text-indent:0.60px;top:456.5px;height:35px;line-height:35px;font-size:25px;color:#000;letter-spacing:0.60px;">$0.00</div>
<div class="t" style="left:1593.5px;width:2000px;text-align:center;text-indent:0.60px;top:456.5px;height:35px;line-height:35px;font-size:25px;color:#000;letter-spacing:0.60px;">$0.00</div>
<div class="t" style="left:1811.0px;width:2000px;text-align:center;text-indent:0.60px;top:456.5px;height:35px;line-height:35px;font-size:25px;color:#000;letter-spacing:0.60px;">$1,500.00</div>
<div class="t" style="left:2018.0px;width:2000px;text-align:center;text-indent:0.60px;top:456.5px;height:35px;line-height:35px;font-size:25px;color:#000;letter-spacing:0.60px;">$0.00</div>
<div class="t" style="left:2236.5px;width:2000px;text-align:center;text-indent:0.60px;top:456.5px;height:35px;line-height:35px;font-size:25px;color:#000;letter-spacing:0.60px;">Bob Snob</div>
<div class="t" style="left:2430.0px;width:2000px;text-align:center;text-indent:0.60px;top:456.5px;height:35px;line-height:35px;font-size:25px;color:#000;letter-spacing:0.60px;">8</div>
<div class="t" style="left:2582.0px;width:2000px;text-align:center;text-indent:0.60px;top:456.5px;height:35px;line-height:35px;font-size:25px;color:#000;letter-spacing:0.60px;">0</div>
<div class="t" style="left:2734.0px;width:2000px;text-align:center;text-indent:0.60px;top:456.5px;height:35px;line-height:35px;font-size:25px;color:#000;letter-spacing:0.60px;">0</div>
<div class="t" style="left:-841.5px;width:2000px;text-align:center;text-indent:0.60px;top:496.5px;height:35px;line-height:35px;font-size:25px;color:#000;letter-spacing:0.60px;">Nick Gines</div>
<div class="t" style="left:-545.5px;width:2000px;text-align:center;text-indent:0.60px;top:496.5px;height:35px;line-height:35px;font-size:25px;color:#000;letter-spacing:0.60px;">Mitigation Job 2</div>
<div class="t" style="left:-135.5px;width:2000px;text-align:center;text-indent:0.60px;top:496.5px;height:35px;line-height:35px;font-size:25px;color:#000;letter-spacing:0.60px;">Check Received (Paid in Full)</div>
<div class="t" style="left:250.5px;width:2000px;text-align:center;text-indent:0.60px;top:496.5px;height:35px;line-height:35px;font-size:25px;color:#000;letter-spacing:0.60px;">12/08/2023</div>
<div class="t" style="left:451.0px;width:2000px;text-align:center;text-indent:0.60px;top:496.5px;height:35px;line-height:35px;font-size:25px;color:#000;letter-spacing:0.60px;">Eagle</div>
<div class="t" style="left:627.5px;width:2000px;text-align:center;text-indent:0.60px;top:496.5px;height:35px;line-height:35px;font-size:25px;color:#000;letter-spacing:0.60px;">Client</div>
<div class="t" style="left:1366.0px;width:2000px;text-align:center;text-indent:0.60px;top:496.5px;height:35px;line-height:35px;font-size:25px;color:#000;letter-spacing:0.60px;">$0.00</div>
<div class="t" style="left:1593.5px;width:2000px;text-align:center;text-indent:0.60px;top:496.5px;height:35px;line-height:35px;font-size:25px;color:#000;letter-spacing:0.60px;">$0.00</div>
<div class="t" style="left:1811.0px;width:2000px;text-align:center;text-indent:0.60px;top:496.5px;height:35px;line-height:35px;font-size:25px;color:#000;letter-spacing:0.60px;">$5,565.00</div>
<div class="t" style="left:2018.0px;width:2000px;text-align:center;text-indent:0.60px;top:496.5px;height:35px;line-height:35px;font-size:25px;color:#000;letter-spacing:0.60px;">$0.00</div>
<div class="t" style="left:2430.0px;width:2000px;text-align:center;text-indent:0.60px;top:496.5px;height:35px;line-height:35px;font-size:25px;color:#000;letter-spacing:0.60px;">3</div>
<div class="t" style="left:2582.0px;width:2000px;text-align:center;text-indent:0.60px;top:496.5px;height:35px;line-height:35px;font-size:25px;color:#000;letter-spacing:0.60px;">0</div>
<div class="t" style="left:2734.0px;width:2000px;text-align:center;text-indent:0.60px;top:496.5px;height:35px;line-height:35px;font-size:25px;color:#000;letter-spacing:0.60px;">0</div>
<div class="t" style="left:-841.5px;width:2000px;text-align:center;text-indent:0.60px;top:536.5px;height:35px;line-height:35px;font-size:25px;color:#000;letter-spacing:0.60px;">Ron Swan</div>
<div class="t" style="left:-545.5px;width:2000px;text-align:center;text-indent:0.60px;top:536.5px;height:35px;line-height:35px;font-size:25px;color:#000;letter-spacing:0.60px;">Mitigation Job 2</div>
<div class="t" style="left:-135.5px;width:2000px;text-align:center;text-indent:0.60px;top:536.5px;height:35px;line-height:35px;font-size:25px;color:#000;letter-spacing:0.60px;">Jobs In Process</div>
<div class="t" style="left:250.5px;width:2000px;text-align:center;text-indent:0.60px;top:536.5px;height:35px;line-height:35px;font-size:25px;color:#000;letter-spacing:0.60px;">01/08/2025</div>
<div class="t" style="left:451.0px;width:2000px;text-align:center;text-indent:0.60px;top:536.5px;height:35px;line-height:35px;font-size:25px;color:#000;letter-spacing:0.60px;">Eagle</div>
<div class="t" style="left:627.5px;width:2000px;text-align:center;text-indent:0.60px;top:536.5px;height:35px;line-height:35px;font-size:25px;color:#000;letter-spacing:0.60px;">Client</div>
<div class="t" style="left:1366.0px;width:2000px;text-align:center;text-indent:0.60px;top:536.5px;height:35px;line-height:35px;font-size:25px;color:#000;letter-spacing:0.60px;">$0.00</div>
<div class="t" style="left:1593.5px;width:2000px;text-align:center;text-indent:0.60px;top:536.5px;height:35px;line-height:35px;font-size:25px;color:#000;letter-spacing:0.60px;">$0.00</div>
<div class="t" style="left:1811.0px;width:2000px;text-align:center;text-indent:0.60px;top:536.5px;height:35px;line-height:35px;font-size:25px;color:#000;letter-spacing:0.60px;">$0.00</div>
<div class="t" style="left:2018.0px;width:2000px;text-align:center;text-indent:0.60px;top:536.5px;height:35px;line-height:35px;font-size:25px;color:#000;letter-spacing:0.60px;">$0.00</div>
<div class="t" style="left:2236.5px;width:2000px;text-align:center;text-indent:0.60px;top:536.5px;height:35px;line-height:35px;font-size:25px;color:#000;letter-spacing:0.60px;">Dev Eloper</div>
<div class="t" style="left:2430.0px;width:2000px;text-align:center;text-indent:0.60px;top:536.5px;height:35px;line-height:35px;font-size:25px;color:#000;letter-spacing:0.60px;">27.7</div>
<div class="t" style="left:2582.0px;width:2000px;text-align:center;text-indent:0.60px;top:536.5px;height:35px;line-height:35px;font-size:25px;color:#000;letter-spacing:0.60px;">0</div>
<div class="t" style="left:2734.0px;width:2000px;text-align:center;text-indent:0.60px;top:536.5px;height:35px;line-height:35px;font-size:25px;color:#000;letter-spacing:0.60px;">0</div>
<div class="t" style="left:-841.5px;width:2000px;text-align:center;text-indent:0.60px;top:576.5px;height:35px;line-height:35px;font-size:25px;color:#fff;letter-spacing:0.60px;">Ron Swan</div>
<div class="t" style="left:-545.5px;width:2000px;text-align:center;text-indent:0.60px;top:576.5px;height:35px;line-height:35px;font-size:25px;color:#fff;letter-spacing:0.60px;">Mitigation Job 1</div>
<div class="t" style="left:-135.5px;width:2000px;text-align:center;text-indent:0.60px;top:576.5px;height:35px;line-height:35px;font-size:25px;color:#fff;letter-spacing:0.60px;">Payment Issued</div>
<div class="t" style="left:250.5px;width:2000px;text-align:center;text-indent:0.60px;top:576.5px;height:35px;line-height:35px;font-size:25px;color:#fff;letter-spacing:0.60px;">05/08/2023</div>
<div class="t" style="left:451.0px;width:2000px;text-align:center;text-indent:0.60px;top:576.5px;height:35px;line-height:35px;font-size:25px;color:#fff;letter-spacing:0.60px;">Eagle</div>
<div class="t" style="left:627.5px;width:2000px;text-align:center;text-indent:0.60px;top:576.5px;height:35px;line-height:35px;font-size:25px;color:#fff;letter-spacing:0.60px;">Insurance</div>
<div class="t" style="left:846.5px;width:2000px;text-align:center;text-indent:0.60px;top:576.5px;height:35px;line-height:35px;font-size:25px;color:#fff;letter-spacing:0.60px;">AAA</div>
<div class="t" style="left:1366.0px;width:2000px;text-align:center;text-indent:0.60px;top:576.5px;height:35px;line-height:35px;font-size:25px;color:#fff;letter-spacing:0.60px;">$0.00</div>
<div class="t" style="left:1593.5px;width:2000px;text-align:center;text-indent:0.60px;top:576.5px;height:35px;line-height:35px;font-size:25px;color:#fff;letter-spacing:0.60px;">$393.05</div>
<div class="t" style="left:1811.0px;width:2000px;text-align:center;text-indent:0.60px;top:576.5px;height:35px;line-height:35px;font-size:25px;color:#fff;letter-spacing:0.60px;">$0.00</div>
<div class="t" style="left:2018.0px;width:2000px;text-align:center;text-indent:0.60px;top:576.5px;height:35px;line-height:35px;font-size:25px;color:#fff;letter-spacing:0.60px;">$0.00</div>
<div class="t" style="left:2236.5px;width:2000px;text-align:center;text-indent:0.60px;top:576.5px;height:35px;line-height:35px;font-size:25px;color:#fff;letter-spacing:0.60px;">Nick Gines</div>
<div class="t" style="left:2430.0px;width:2000px;text-align:center;text-indent:0.60px;top:576.5px;height:35px;line-height:35px;font-size:25px;color:#fff;letter-spacing:0.60px;">0</div>
<div class="t" style="left:2582.0px;width:2000px;text-align:center;text-indent:0.60px;top:576.5px;height:35px;line-height:35px;font-size:25px;color:#fff;letter-spacing:0.60px;">0</div>
<div class="t" style="left:2734.0px;width:2000px;text-align:center;text-indent:0.60px;top:576.5px;height:35px;line-height:35px;font-size:25px;color:#fff;letter-spacing:0.60px;">11.8</div>
<div class="t" style="left:-841.5px;width:2000px;text-align:center;text-indent:0.60px;top:616.5px;height:35px;line-height:35px;font-size:25px;color:#000;letter-spacing:0.60px;">Ronald Martin</div>
<div class="t" style="left:-545.5px;width:2000px;text-align:center;text-indent:0.60px;top:616.5px;height:35px;line-height:35px;font-size:25px;color:#000;letter-spacing:0.60px;">Mitigation Job 1</div>
<div class="t" style="left:-135.5px;width:2000px;text-align:center;text-indent:0.60px;top:616.5px;height:35px;line-height:35px;font-size:25px;color:#000;letter-spacing:0.60px;">Jobs In Process</div>
<div class="t" style="left:250.5px;width:2000px;text-align:center;text-indent:0.60px;top:616.5px;height:35px;line-height:35px;font-size:25px;color:#000;letter-spacing:0.60px;">04/04/2023</div>
<div class="t" style="left:451.0px;width:2000px;text-align:center;text-indent:0.60px;top:616.5px;height:35px;line-height:35px;font-size:25px;color:#000;letter-spacing:0.60px;">Eagle</div>
<div class="t" style="left:627.5px;width:2000px;text-align:center;text-indent:0.60px;top:616.5px;height:35px;line-height:35px;font-size:25px;color:#000;letter-spacing:0.60px;">Insurance</div>
<div class="t" style="left:846.5px;width:2000px;text-align:center;text-indent:0.60px;top:616.5px;height:35px;line-height:35px;font-size:25px;color:#000;letter-spacing:0.60px;">Axis</div>
<div class="t" style="left:1111.0px;width:2000px;text-align:center;text-indent:0.60px;top:616.5px;height:35px;line-height:35px;font-size:25px;color:#000;letter-spacing:0.60px;">1234</div>
<div class="t" style="left:1366.0px;width:2000px;text-align:center;text-indent:0.60px;top:616.5px;height:35px;line-height:35px;font-size:25px;color:#000;letter-spacing:0.60px;">$0.00</div>
<div class="t" style="left:1593.5px;width:2000px;text-align:center;text-indent:0.60px;top:616.5px;height:35px;line-height:35px;font-size:25px;color:#000;letter-spacing:0.60px;">$0.00</div>
<div class="t" style="left:1811.0px;width:2000px;text-align:center;text-indent:0.60px;top:616.5px;height:35px;line-height:35px;font-size:25px;color:#000;letter-spacing:0.60px;">$0.00</div>
<div class="t" style="left:2018.0px;width:2000px;text-align:center;text-indent:0.60px;top:616.5px;height:35px;line-height:35px;font-size:25px;color:#000;letter-spacing:0.60px;">$0.00</div>
<div class="t" style="left:2236.5px;width:2000px;text-align:center;text-indent:0.60px;top:616.5px;height:35px;line-height:35px;font-size:25px;color:#000;letter-spacing:0.60px;">Dev Eloper</div>
<div class="t" style="left:2430.0px;width:2000px;text-align:center;text-indent:0.60px;top:616.5px;height:35px;line-height:35px;font-size:25px;color:#000;letter-spacing:0.60px;">389.7</div>
<div class="t" style="left:2582.0px;width:2000px;text-align:center;text-indent:0.60px;top:616.5px;height:35px;line-height:35px;font-size:25px;color:#000;letter-spacing:0.60px;">0</div>
<div class="t" style="left:2734.0px;width:2000px;text-align:center;text-indent:0.60px;top:616.5px;height:35px;line-height:35px;font-size:25px;color:#000;letter-spacing:0.60px;">0</div>
<div class="t" style="left:-841.5px;width:2000px;text-align:center;text-indent:0.60px;top:656.5px;height:35px;line-height:35px;font-size:25px;color:#000;letter-spacing:0.60px;">Simple Client</div>
<div class="t" style="left:-545.5px;width:2000px;text-align:center;text-indent:0.60px;top:656.5px;height:35px;line-height:35px;font-size:25px;color:#000;letter-spacing:0.60px;">Mitigation Job 1</div>
<div class="t" style="left:-135.5px;width:2000px;text-align:center;text-indent:0.60px;top:656.5px;height:35px;line-height:35px;font-size:25px;color:#000;letter-spacing:0.60px;">Jobs In Process</div>
<div class="t" style="left:250.5px;width:2000px;text-align:center;text-indent:0.60px;top:656.5px;height:35px;line-height:35px;font-size:25px;color:#000;letter-spacing:0.60px;">06/12/2024</div>
<div class="t" style="left:451.0px;width:2000px;text-align:center;text-indent:0.60px;top:656.5px;height:35px;line-height:35px;font-size:25px;color:#000;letter-spacing:0.60px;">W</div>
<div class="t" style="left:627.5px;width:2000px;text-align:center;text-indent:0.60px;top:656.5px;height:35px;line-height:35px;font-size:25px;color:#000;letter-spacing:0.60px;">Insurance</div>
<div class="t" style="left:846.5px;width:2000px;text-align:center;text-indent:0.60px;top:656.5px;height:35px;line-height:35px;font-size:25px;color:#000;letter-spacing:0.60px;">ANPAC</div>
<div class="t" style="left:1111.0px;width:2000px;text-align:center;text-indent:0.60px;top:656.5px;height:35px;line-height:35px;font-size:25px;color:#000;letter-spacing:0.60px;">7</div>
<div class="t" style="left:1366.0px;width:2000px;text-align:center;text-indent:0.60px;top:656.5px;height:35px;line-height:35px;font-size:25px;color:#000;letter-spacing:0.60px;">$0.00</div>
<div class="t" style="left:1593.5px;width:2000px;text-align:center;text-indent:0.60px;top:656.5px;height:35px;line-height:35px;font-size:25px;color:#000;letter-spacing:0.60px;">$0.00</div>
<div class="t" style="left:1811.0px;width:2000px;text-align:center;text-indent:0.60px;top:656.5px;height:35px;line-height:35px;font-size:25px;color:#000;letter-spacing:0.60px;">$0.00</div>
<div class="t" style="left:2018.0px;width:2000px;text-align:center;text-indent:0.60px;top:656.5px;height:35px;line-height:35px;font-size:25px;color:#000;letter-spacing:0.60px;">$0.00</div>
<div class="t" style="left:2236.5px;width:2000px;text-align:center;text-indent:0.60px;top:656.5px;height:35px;line-height:35px;font-size:25px;color:#000;letter-spacing:0.60px;">Nick Gines</div>
<div class="t" style="left:2430.0px;width:2000px;text-align:center;text-indent:0.60px;top:656.5px;height:35px;line-height:35px;font-size:25px;color:#000;letter-spacing:0.60px;">237.5</div>
<div class="t" style="left:2582.0px;width:2000px;text-align:center;text-indent:0.60px;top:656.5px;height:35px;line-height:35px;font-size:25px;color:#000;letter-spacing:0.60px;">0</div>
<div class="t" style="left:2734.0px;width:2000px;text-align:center;text-indent:0.60px;top:656.5px;height:35px;line-height:35px;font-size:25px;color:#000;letter-spacing:0.60px;">0</div>
<div class="t" style="left:-841.5px;width:2000px;text-align:center;text-indent:0.60px;top:696.5px;height:35px;line-height:35px;font-size:25px;color:#000;letter-spacing:0.60px;">Tess Smith</div>
<div class="t" style="left:-545.5px;width:2000px;text-align:center;text-indent:0.60px;top:696.5px;height:35px;line-height:35px;font-size:25px;color:#000;letter-spacing:0.60px;">Mitigation Job 1</div>
<div class="t" style="left:-135.5px;width:2000px;text-align:center;text-indent:0.60px;top:696.5px;height:35px;line-height:35px;font-size:25px;color:#000;letter-spacing:0.60px;">Ready to Bill</div>
<div class="t" style="left:250.5px;width:2000px;text-align:center;text-indent:0.60px;top:696.5px;height:35px;line-height:35px;font-size:25px;color:#000;letter-spacing:0.60px;">02/06/2024</div>
<div class="t" style="left:451.0px;width:2000px;text-align:center;text-indent:0.60px;top:696.5px;height:35px;line-height:35px;font-size:25px;color:#000;letter-spacing:0.60px;">Eagle</div>
<div class="t" style="left:627.5px;width:2000px;text-align:center;text-indent:0.60px;top:696.5px;height:35px;line-height:35px;font-size:25px;color:#000;letter-spacing:0.60px;">Insurance</div>
<div class="t" style="left:846.5px;width:2000px;text-align:center;text-indent:0.60px;top:696.5px;height:35px;line-height:35px;font-size:25px;color:#000;letter-spacing:0.60px;">AAA</div>
<div class="t" style="left:1111.0px;width:2000px;text-align:center;text-indent:0.60px;top:696.5px;height:35px;line-height:35px;font-size:25px;color:#000;letter-spacing:0.60px;">669</div>
<div class="t" style="left:1366.0px;width:2000px;text-align:center;text-indent:0.60px;top:696.5px;height:35px;line-height:35px;font-size:25px;color:#000;letter-spacing:0.60px;">$139.88</div>
<div class="t" style="left:1593.5px;width:2000px;text-align:center;text-indent:0.60px;top:696.5px;height:35px;line-height:35px;font-size:25px;color:#000;letter-spacing:0.60px;">$0.01</div>
<div class="t" style="left:1811.0px;width:2000px;text-align:center;text-indent:0.60px;top:696.5px;height:35px;line-height:35px;font-size:25px;color:#000;letter-spacing:0.60px;">$100.00</div>
<div class="t" style="left:2018.0px;width:2000px;text-align:center;text-indent:0.60px;top:696.5px;height:35px;line-height:35px;font-size:25px;color:#000;letter-spacing:0.60px;">$0.00</div>
<div class="t" style="left:2236.5px;width:2000px;text-align:center;text-indent:0.60px;top:696.5px;height:35px;line-height:35px;font-size:25px;color:#000;letter-spacing:0.60px;">Nick Gines</div>
<div class="t" style="left:2430.0px;width:2000px;text-align:center;text-indent:0.60px;top:696.5px;height:35px;line-height:35px;font-size:25px;color:#000;letter-spacing:0.60px;">0</div>
<div class="t" style="left:2582.0px;width:2000px;text-align:center;text-indent:0.60px;top:696.5px;height:35px;line-height:35px;font-size:25px;color:#000;letter-spacing:0.60px;">0</div>
<div class="t" style="left:2734.0px;width:2000px;text-align:center;text-indent:0.60px;top:696.5px;height:35px;line-height:35px;font-size:25px;color:#000;letter-spacing:0.60px;">364.3</div>
<div class="t" style="left:-841.5px;width:2000px;text-align:center;text-indent:0.60px;top:736.5px;height:35px;line-height:35px;font-size:25px;color:#000;letter-spacing:0.60px;">Tess Smith</div>
<div class="t" style="left:-545.5px;width:2000px;text-align:center;text-indent:0.60px;top:736.5px;height:35px;line-height:35px;font-size:25px;color:#000;letter-spacing:0.60px;">Mitigation Job 2</div>
<div class="t" style="left:-135.5px;width:2000px;text-align:center;text-indent:0.60px;top:736.5px;height:35px;line-height:35px;font-size:25px;color:#000;letter-spacing:0.60px;">Invoiced</div>
<div class="t" style="left:250.5px;width:2000px;text-align:center;text-indent:0.60px;top:736.5px;height:35px;line-height:35px;font-size:25px;color:#000;letter-spacing:0.60px;">04/20/2023</div>
<div class="t" style="left:451.0px;width:2000px;text-align:center;text-indent:0.60px;top:736.5px;height:35px;line-height:35px;font-size:25px;color:#000;letter-spacing:0.60px;">Eagle</div>
<div class="t" style="left:627.5px;width:2000px;text-align:center;text-indent:0.60px;top:736.5px;height:35px;line-height:35px;font-size:25px;color:#000;letter-spacing:0.60px;">Insurance</div>
<div class="t" style="left:846.5px;width:2000px;text-align:center;text-indent:0.60px;top:736.5px;height:35px;line-height:35px;font-size:25px;color:#000;letter-spacing:0.60px;">AAA</div>
<div class="t" style="left:1366.0px;width:2000px;text-align:center;text-indent:0.60px;top:736.5px;height:35px;line-height:35px;font-size:25px;color:#000;letter-spacing:0.60px;">$93.64</div>
<div class="t" style="left:1593.5px;width:2000px;text-align:center;text-indent:0.60px;top:736.5px;height:35px;line-height:35px;font-size:25px;color:#000;letter-spacing:0.60px;">$70.10</div>
<div class="t" style="left:1811.0px;width:2000px;text-align:center;text-indent:0.60px;top:736.5px;height:35px;line-height:35px;font-size:25px;color:#000;letter-spacing:0.60px;">$0.00</div>
<div class="t" style="left:2018.0px;width:2000px;text-align:center;text-indent:0.60px;top:736.5px;height:35px;line-height:35px;font-size:25px;color:#000;letter-spacing:0.60px;">$0.00</div>
<div class="t" style="left:2430.0px;width:2000px;text-align:center;text-indent:0.60px;top:736.5px;height:35px;line-height:35px;font-size:25px;color:#000;letter-spacing:0.60px;">0</div>
<div class="t" style="left:2582.0px;width:2000px;text-align:center;text-indent:0.60px;top:736.5px;height:35px;line-height:35px;font-size:25px;color:#000;letter-spacing:0.60px;">0</div>
<div class="t" style="left:2734.0px;width:2000px;text-align:center;text-indent:0.60px;top:736.5px;height:35px;line-height:35px;font-size:25px;color:#000;letter-spacing:0.60px;">406</div>
<div class="r" style="left:26px;top:786px;width:3772px;height:1200px;background:#fff;border-radius:30px;box-sizing:border-box;border:2px solid #a7abaf;"></div>
<svg class="s" style="left:66px;top:812px;" width="14" height="22" viewBox="0 0 14 22"><path d="M1.5 1.5 L12.5 11.0 L1.5 20.5 Z" fill="#000" stroke="#000" stroke-width="3" stroke-linejoin="round"/></svg>
<div class="t" style="left:110.4px;top:797.9px;height:50px;line-height:50px;font-size:36px;color:#000;letter-spacing:1.17px;-webkit-text-stroke:0.45px #000;">Ron Swan</div>
<div class="r" style="left:2881px;top:793px;width:264px;height:60px;background:#eff1fc;border-radius:30px;box-sizing:border-box;"></div>
<svg class="s" style="left:2901px;top:803px;" width="40" height="40" viewBox="0 0 40 40"><circle cx="20" cy="20" r="20" fill="#3d8f1c"/><path d="M17.6 33.5 L17.6 12.8 L14.2 12.8 A7.6 7.6 0 0 0 14.2 28 L15.6 28" fill="none" stroke="#fff" stroke-width="2.6"/><path d="M22.4 6.5 L22.4 27.2 L25.8 27.2 A7.6 7.6 0 0 0 25.8 12 L24.4 12" fill="none" stroke="#fff" stroke-width="2.6"/></svg>
<div class="t" style="left:2952.2px;top:802.6px;height:42px;line-height:42px;font-size:30px;color:#000;letter-spacing:1.61px;">Quickbooks</div>
<div class="r" style="left:3177px;top:793px;width:273px;height:60px;background:#eff1fc;border-radius:30px;box-sizing:border-box;"></div>
<svg class="s" style="left:3196px;top:803px;" width="42" height="41" viewBox="0 0 42 41"><path d="M1.3 23.8 L14.8 9.5 L14.8 18 L19.9 18 L19.9 28.1 L14.8 28.1 L14.8 39.8 Z" fill="#0c0e32"/><path d="M40.9 15 L26.6 0.7 L26.6 10.3 L21.4 10.3 L21.4 20.4 L26.6 20.4 L26.6 29.2 Z" fill="#0c0e32"/></svg>
<div class="t" style="left:3247.0px;top:802.6px;height:42px;line-height:42px;font-size:30px;color:#000;letter-spacing:1.09px;">Transfer Log</div>
<div class="r" style="left:3482px;top:793px;width:214px;height:60px;background:#eff1fc;border-radius:30px;box-sizing:border-box;"></div>
<svg class="s" style="left:3501px;top:803px;" width="40" height="36" viewBox="0 0 40 36"><polyline points="2.5,16.5 19.5,2.5 36.5,16.5" fill="none" stroke="#0c0e32" stroke-width="4.2" stroke-linecap="round" stroke-linejoin="miter"/><rect x="27" y="2.5" width="5.5" height="9.5" fill="#0c0e32"/><path d="M6.3 18.5 L19.5 7.8 L32.8 18.5 L32.8 34.5 L6.3 34.5 Z" fill="#0c0e32"/><path d="M18 19 L21.5 22.5 L19 27 L22 34.5 L17.5 34.5 L15.5 27.5 Z" fill="#eff1fc"/><circle cx="30" cy="26.2" r="10.8" fill="#eff1fc"/><circle cx="30" cy="26.2" r="9.4" fill="#3aa51c"/><path d="M30 20.6 L30 31.8 M24.4 26.2 L35.6 26.2" stroke="#fff" stroke-width="2.3"/></svg>
<div class="t" style="left:3552.7px;top:802.6px;height:42px;line-height:42px;font-size:30px;color:#000;letter-spacing:1.99px;">Add Job</div>
<svg class="s" style="left:3748px;top:808px;" width="26" height="31" viewBox="0 0 26 31"><path d="M9.36 1 Q9.36 0 11.700000000000001 0 L14.3 0 Q16.64 0 16.64 1 L16.64 2.5 L25 2.5 Q26 2.5 26 3.5 L26 5 Q26 6 25 6 L1 6 Q0 6 0 5 L0 3.5 Q0 2.5 1 2.5 L9.36 2.5 Z" fill="#b33f35"/><path d="M1.5 8 L24.5 8 L23 28.5 Q22.8 31 20 31 L6 31 Q3.2 31 3 28.5 Z" fill="#b33f35"/></svg>
<div class="r" style="left:48px;top:858px;width:3728px;height:170px;background:#eff1fc;border-radius:27px;box-sizing:border-box;border:2px solid #5b6af3;"></div>
<svg class="s" style="left:84px;top:885px;" width="14" height="21" viewBox="0 0 14 21"><path d="M1.5 1.5 L12.5 10.5 L1.5 19.5 Z" fill="#000" stroke="#000" stroke-width="3" stroke-linejoin="round"/></svg>
<div class="t" style="left:128.5px;top:871.3px;height:50px;line-height:50px;font-size:36px;color:#000;letter-spacing:2.16px;-webkit-text-stroke:0.45px #000;">Mitigation Job 2</div>
<svg class="s" style="left:3459px;top:877px;" width="40" height="36" viewBox="0 0 40 36"><polyline points="2.5,16.5 19.5,2.5 36.5,16.5" fill="none" stroke="#0c0e32" stroke-width="4.2" stroke-linecap="round" stroke-linejoin="miter"/><rect x="27" y="2.5" width="5.5" height="9.5" fill="#0c0e32"/><path d="M6.3 18.5 L19.5 7.8 L32.8 18.5 L32.8 34.5 L6.3 34.5 Z" fill="#0c0e32"/><path d="M18 19 L21.5 22.5 L19 27 L22 34.5 L17.5 34.5 L15.5 27.5 Z" fill="#eff1fc"/><circle cx="30" cy="26.2" r="10.8" fill="#eff1fc"/><circle cx="30" cy="26.2" r="9.4" fill="#3aa51c"/><path d="M30 20.6 L30 31.8 M24.4 26.2 L35.6 26.2" stroke="#fff" stroke-width="2.3"/></svg>
<div class="t" style="left:3511.3px;top:874.8px;height:45px;line-height:45px;font-size:32px;color:#000;letter-spacing:0.65px;">Add Invoice</div>
<svg class="s" style="left:3726px;top:882px;" width="26" height="31" viewBox="0 0 26 31"><path d="M9.36 1 Q9.36 0 11.700000000000001 0 L14.3 0 Q16.64 0 16.64 1 L16.64 2.5 L25 2.5 Q26 2.5 26 3.5 L26 5 Q26 6 25 6 L1 6 Q0 6 0 5 L0 3.5 Q0 2.5 1 2.5 L9.36 2.5 Z" fill="#b33f35"/><path d="M1.5 8 L24.5 8 L23 28.5 Q22.8 31 20 31 L6 31 Q3.2 31 3 28.5 Z" fill="#b33f35"/></svg>
<div class="r" style="left:70px;top:932px;width:3684px;height:73px;background:#fff;border-radius:36px;box-sizing:border-box;border:2px solid #a7abaf;"></div>
<svg class="s" style="left:130px;top:956px;" width="14" height="22" viewBox="0 0 14 22"><path d="M1.5 1.5 L12.5 11.0 L1.5 20.5 Z" fill="#000" stroke="#000" stroke-width="3" stroke-linejoin="round"/></svg>
<div class="t" style="left:174.5px;top:941.7px;height:52px;line-height:52px;font-size:37px;color:#000;letter-spacing:-0.10px;-webkit-text-stroke:0.45px #000;">Invoice 1</div>
<svg class="s" style="left:395.7px;top:955.8px;" width="34" height="24" viewBox="0 0 34 24"><g stroke="#000" stroke-width="3.5" stroke-linecap="round"><path d="M10.7 2.2 L6.6 20.6 M18.4 2.2 L14.5 20.6 M3.6 8 L23 8 M1.8 14.6 L21.4 14.6"/></g><circle cx="28.1" cy="8.6" r="2.1"/><circle cx="28.1" cy="19.5" r="2.1"/></svg>
<div class="t" style="left:437.0px;top:950.8px;height:36px;line-height:36px;font-size:26px;color:#000;letter-spacing:0.02px;">250108081726</div>
<div class="t" style="left:663.8px;top:950.8px;height:36px;line-height:36px;font-size:26px;color:#000;letter-spacing:2.18px;font-weight:700;-webkit-text-stroke:0.4px #000;">Last Saved On:</div>
<div class="t" style="left:953.7px;top:950.8px;height:36px;line-height:36px;font-size:26px;color:#000;letter-spacing:2.20px;font-weight:700;-webkit-text-stroke:0.4px #000;">Prepared For:</div>
<div class="t" style="left:1171.0px;top:950.8px;height:36px;line-height:36px;font-size:26px;color:#000;letter-spacing:0.09px;">ANPAC</div>
<div class="t" style="left:1311.0px;top:950.8px;height:36px;line-height:36px;font-size:26px;color:#000;letter-spacing:1.12px;font-weight:700;-webkit-text-stroke:0.4px #000;">Bill To:</div>
<div class="t" style="left:1425.7px;top:950.8px;height:36px;line-height:36px;font-size:26px;color:#000;letter-spacing:1.76px;">Insurance</div>
<div class="t" style="left:1608.0px;top:950.8px;height:36px;line-height:36px;font-size:26px;color:#000;letter-spacing:2.43px;font-weight:700;-webkit-text-stroke:0.4px #000;">Total:</div>
<div class="t" style="left:1709.0px;top:950.8px;height:36px;line-height:36px;font-size:26px;color:#000;letter-spacing:1.23px;">$0.00</div>
<div class="r" style="left:3024px;top:946px;width:640px;height:45px;background:#fff;border-radius:10px;box-sizing:border-box;border:2px solid #cdd1f7;"></div>
<svg class="s" style="left:3704px;top:953px;" width="26" height="31" viewBox="0 0 26 31"><path d="M9.36 1 Q9.36 0 11.700000000000001 0 L14.3 0 Q16.64 0 16.64 1 L16.64 2.5 L25 2.5 Q26 2.5 26 3.5 L26 5 Q26 6 25 6 L1 6 Q0 6 0 5 L0 3.5 Q0 2.5 1 2.5 L9.36 2.5 Z" fill="#b33f35"/><path d="M1.5 8 L24.5 8 L23 28.5 Q22.8 31 20 31 L6 31 Q3.2 31 3 28.5 Z" fill="#b33f35"/></svg>
<div class="r" style="left:48px;top:1048px;width:3728px;height:1000px;background:#eff1fc;border-radius:27px;box-sizing:border-box;border:2px solid #5b6af3;"></div>
<svg class="s" style="left:84px;top:1074px;" width="14" height="22" viewBox="0 0 14 22"><path d="M1.5 1.5 L12.5 11.0 L1.5 20.5 Z" fill="#000" stroke="#000" stroke-width="3" stroke-linejoin="round"/></svg>
<div class="t" style="left:128.5px;top:1061.5px;height:50px;line-height:50px;font-size:36px;color:#000;letter-spacing:1.54px;-webkit-text-stroke:0.45px #000;">Mitigation Job 1</div>
<svg class="s" style="left:3459px;top:1067px;" width="40" height="36" viewBox="0 0 40 36"><polyline points="2.5,16.5 19.5,2.5 36.5,16.5" fill="none" stroke="#0c0e32" stroke-width="4.2" stroke-linecap="round" stroke-linejoin="miter"/><rect x="27" y="2.5" width="5.5" height="9.5" fill="#0c0e32"/><path d="M6.3 18.5 L19.5 7.8 L32.8 18.5 L32.8 34.5 L6.3 34.5 Z" fill="#0c0e32"/><path d="M18 19 L21.5 22.5 L19 27 L22 34.5 L17.5 34.5 L15.5 27.5 Z" fill="#eff1fc"/><circle cx="30" cy="26.2" r="10.8" fill="#eff1fc"/><circle cx="30" cy="26.2" r="9.4" fill="#3aa51c"/><path d="M30 20.6 L30 31.8 M24.4 26.2 L35.6 26.2" stroke="#fff" stroke-width="2.3"/></svg>
<div class="t" style="left:3511.3px;top:1064.8px;height:45px;line-height:45px;font-size:32px;color:#000;letter-spacing:0.65px;">Add Invoice</div>
<svg class="s" style="left:3726px;top:1072px;" width="26" height="31" viewBox="0 0 26 31"><path d="M9.36 1 Q9.36 0 11.700000000000001 0 L14.3 0 Q16.64 0 16.64 1 L16.64 2.5 L25 2.5 Q26 2.5 26 3.5 L26 5 Q26 6 25 6 L1 6 Q0 6 0 5 L0 3.5 Q0 2.5 1 2.5 L9.36 2.5 Z" fill="#b33f35"/><path d="M1.5 8 L24.5 8 L23 28.5 Q22.8 31 20 31 L6 31 Q3.2 31 3 28.5 Z" fill="#b33f35"/></svg>
<div class="r" style="left:70px;top:1122px;width:3684px;height:900px;background:#fff;border-radius:32px;box-sizing:border-box;border:2px solid #a7abaf;"></div>
<svg class="s" style="left:126px;top:1153px;" width="22" height="13" viewBox="0 0 22 13"><path d="M1.5 1.5 L20.5 1.5 L11.0 11.5 Z" fill="#000" stroke="#000" stroke-width="3" stroke-linejoin="round"/></svg>
<div class="t" style="left:178.6px;top:1132.2px;height:52px;line-height:52px;font-size:37px;color:#000;letter-spacing:-0.04px;-webkit-text-stroke:0.45px #000;">Invoice 1</div>
<svg class="s" style="left:400.7px;top:1147px;" width="34" height="24" viewBox="0 0 34 24"><g stroke="#000" stroke-width="3.5" stroke-linecap="round"><path d="M10.7 2.2 L6.6 20.6 M18.4 2.2 L14.5 20.6 M3.6 8 L23 8 M1.8 14.6 L21.4 14.6"/></g><circle cx="28.1" cy="8.6" r="2.1"/><circle cx="28.1" cy="19.5" r="2.1"/></svg>
<div class="t" style="left:441.0px;top:1142.0px;height:36px;line-height:36px;font-size:26px;color:#000;letter-spacing:-0.41px;">241010160259</div>
<div class="t" style="left:663.8px;top:1142.0px;height:36px;line-height:36px;font-size:26px;color:#000;letter-spacing:2.07px;font-weight:700;-webkit-text-stroke:0.4px #000;">Last Saved On:</div>
<div class="t" style="left:901.0px;top:1142.0px;height:36px;line-height:36px;font-size:26px;color:#000;letter-spacing:1.21px;">01/29/2025</div>
<div class="t" style="left:1096.8px;top:1142.0px;height:36px;line-height:36px;font-size:26px;color:#000;letter-spacing:2.06px;font-weight:700;-webkit-text-stroke:0.4px #000;">Prepared For:</div>
<div class="t" style="left:1313.0px;top:1142.0px;height:36px;line-height:36px;font-size:26px;color:#000;letter-spacing:2.78px;">Jim</div>
<div class="t" style="left:1412.5px;top:1142.0px;height:36px;line-height:36px;font-size:26px;color:#000;letter-spacing:1.05px;font-weight:700;-webkit-text-stroke:0.4px #000;">Bill To:</div>
<div class="t" style="left:1525.0px;top:1142.0px;height:36px;line-height:36px;font-size:26px;color:#000;letter-spacing:1.80px;">Client</div>
<div class="t" style="left:1654.0px;top:1142.0px;height:36px;line-height:36px;font-size:26px;color:#000;letter-spacing:2.43px;font-weight:700;-webkit-text-stroke:0.4px #000;">Total:</div>
<div class="t" style="left:1755.5px;top:1142.0px;height:36px;line-height:36px;font-size:26px;color:#000;letter-spacing:0.73px;">$3,525.64</div>
<div class="r" style="left:3024px;top:1136px;width:640px;height:45px;background:#fff;border-radius:10px;box-sizing:border-box;border:2px solid #cdd1f7;"></div>
<svg class="s" style="left:3704px;top:1144px;" width="26" height="31" viewBox="0 0 26 31"><path d="M9.36 1 Q9.36 0 11.700000000000001 0 L14.3 0 Q16.64 0 16.64 1 L16.64 2.5 L25 2.5 Q26 2.5 26 3.5 L26 5 Q26 6 25 6 L1 6 Q0 6 0 5 L0 3.5 Q0 2.5 1 2.5 L9.36 2.5 Z" fill="#b33f35"/><path d="M1.5 8 L24.5 8 L23 28.5 Q22.8 31 20 31 L6 31 Q3.2 31 3 28.5 Z" fill="#b33f35"/></svg>
<div class="r" style="left:116px;top:1226px;width:393px;height:70px;background:#eff1fc;border-radius:35px;box-sizing:border-box;"></div>
<svg class="s" style="left:136px;top:1245px;" width="40" height="32" viewBox="0 0 40 32"><rect x="0" y="0" width="40" height="4.6" rx="2.3" fill="#0c0e32"/><rect x="6.5" y="13" width="27" height="4.6" rx="2.3" fill="#0c0e32"/><rect x="13.3" y="26.5" width="13.4" height="4.6" rx="2.3" fill="#0c0e32"/></svg>
<div class="t" style="left:187.5px;top:1239.6px;height:42px;line-height:42px;font-size:30px;color:#000;letter-spacing:0.52px;">Filter Service List</div>
<svg class="s" style="left:460px;top:1256px;" width="28" height="16" viewBox="0 0 28 16"><polyline points="1.9,1.9 14.0,14.1 26.1,1.9" fill="none" stroke="#000" stroke-width="3.8" stroke-linecap="round" stroke-linejoin="round"/></svg>
<div class="r" style="left:530px;top:1226px;width:263px;height:70px;background:#eff1fc;border-radius:35px;box-sizing:border-box;"></div>
<svg class="s" style="left:551px;top:1242px;" width="38" height="39" viewBox="0 0 38 39"><rect x="0" y="3" width="38" height="35.5" rx="5" fill="#0c0e32"/><rect x="7.5" y="0" width="5" height="9" rx="1.5" fill="#0c0e32"/><rect x="25.5" y="0" width="5" height="9" rx="1.5" fill="#0c0e32"/><rect x="9" y="1" width="2" height="7" fill="#eff1fc"/><rect x="27" y="1" width="2" height="7" fill="#eff1fc"/><rect x="5.5" y="16" width="27" height="2.4" fill="#eff1fc"/><rect x="5.5" y="25.3" width="27" height="2.4" fill="#eff1fc"/></svg>
<div class="t" style="left:600.3px;top:1239.6px;height:42px;line-height:42px;font-size:30px;color:#000;letter-spacing:1.14px;">Show Notes</div>
<div class="r" style="left:813px;top:1226px;width:301px;height:70px;background:#eff1fc;border-radius:35px;box-sizing:border-box;"></div>
<svg class="s" style="left:833px;top:1240px;" width="42" height="42" viewBox="0 0 42 42"><path d="M1 4 Q1 1 4 1 L24 1 L33 10 L33 22 L21 34 L19 40 L4 40 Q1 40 1 37 Z" fill="#0c0e32"/><path d="M24 1 L24 10 L33 10 Z" fill="#eff1fc"/><rect x="6" y="7" width="6" height="2" fill="#fff"/><text x="7" y="33" font-family="Liberation Sans" font-weight="700" font-size="17" fill="#fff">$</text><path d="M23 37 L36.5 23.5 L40.5 27.5 L27 41 L22 42 Z" fill="#0c0e32" stroke="#eff1fc" stroke-width="1.6"/></svg>
<div class="t" style="left:883.6px;top:1239.6px;height:42px;line-height:42px;font-size:30px;color:#000;letter-spacing:1.12px;">Edit Invoice</div>
<svg class="s" style="left:1064.7px;top:1256px;" width="27" height="16" viewBox="0 0 27 16"><polyline points="1.9,1.9 13.5,14.1 25.1,1.9" fill="none" stroke="#000" stroke-width="3.8" stroke-linecap="round" stroke-linejoin="round"/></svg>
<div class="r" style="left:1134px;top:1226px;width:271px;height:70px;background:#eff1fc;border-radius:35px;box-sizing:border-box;"></div>
<svg class="s" style="left:1158px;top:1241px;" width="35" height="40" viewBox="0 0 35 40"><path d="M0 3 Q0 0 3 0 L26 0 L34 8 L34 37 Q34 40 31 40 L3 40 Q0 40 0 37 Z" fill="#0c0e32"/><text x="2.5" y="29" font-family="Liberation Sans" font-weight="700" font-size="13" fill="#fff" letter-spacing="0.2" transform="scale(1,1.05)">PDF</text></svg>
<div class="t" style="left:1206.0px;top:1239.6px;height:42px;line-height:42px;font-size:30px;color:#000;letter-spacing:-0.29px;">Make PDF</div>
<svg class="s" style="left:1358px;top:1251px;" width="26" height="16" viewBox="0 0 26 16"><polyline points="1.9,1.9 13.0,14.1 24.1,1.9" fill="none" stroke="#000" stroke-width="3.8" stroke-linecap="round" stroke-linejoin="round"/></svg>
<div class="r" style="left:1427px;top:1226px;width:354px;height:70px;background:#eff1fc;border-radius:35px;box-sizing:border-box;"></div>
<svg class="s" style="left:1447px;top:1241px;" width="41" height="40" viewBox="0 0 41 40"><rect x="0" y="0" width="33" height="33" rx="3" fill="#0c0e32"/><rect x="4" y="4" width="36" height="36" rx="3" fill="#eff1fc"/><rect x="6" y="6" width="34" height="34" rx="3" fill="#0c0e32"/></svg>
<div class="t" style="left:1497.7px;top:1239.6px;height:42px;line-height:42px;font-size:30px;color:#000;letter-spacing:1.63px;">Invoice Actions</div>
<svg class="s" style="left:1734.4px;top:1251px;" width="26" height="16" viewBox="0 0 26 16"><polyline points="1.9,1.9 13.0,14.1 24.1,1.9" fill="none" stroke="#000" stroke-width="3.8" stroke-linecap="round" stroke-linejoin="round"/></svg>
<div class="t" style="left:116.0px;top:1333.8px;height:46px;line-height:46px;font-size:33px;color:#687180;letter-spacing:0.00px;transform:skewX(-5deg);">#</div>
<div class="t" style="left:158.0px;top:1331.2px;height:43px;line-height:43px;font-size:31px;color:#000;letter-spacing:-1.26px;">241010160259</div>
<div class="r" style="left:141px;top:1382.5px;width:228px;height:2px;background:#4655f0;border-radius:0px;box-sizing:border-box;"></div>
<div class="t" style="left:400.0px;top:1336.0px;height:43px;line-height:43px;font-size:31px;color:#687180;letter-spacing:-1.75px;">For</div>
<div class="t" style="left:460.7px;top:1333.3px;height:43px;line-height:43px;font-size:31px;color:#000;letter-spacing:1.79px;">Jim</div>
<div class="r" style="left:444px;top:1385px;width:622px;height:2px;background:#4655f0;border-radius:0px;box-sizing:border-box;"></div>
<div class="t" style="left:1097.0px;top:1336.6px;height:42px;line-height:42px;font-size:30px;color:#687180;letter-spacing:2.09px;">Overhead</div>
<div class="t" style="left:1273.6px;top:1333.2px;height:41px;line-height:41px;font-size:29.5px;color:#000;letter-spacing:-0.36px;">0.00%</div>
<div class="r" style="left:1245px;top:1385px;width:140px;height:2px;background:#b5382c;border-radius:0px;box-sizing:border-box;"></div>
<div class="t" style="left:1415.5px;top:1336.6px;height:42px;line-height:42px;font-size:30px;color:#687180;letter-spacing:0.86px;">Profit</div>
<div class="t" style="left:1519.0px;top:1333.2px;height:41px;line-height:41px;font-size:29.5px;color:#000;letter-spacing:-0.16px;">0.00%</div>
<div class="r" style="left:1491px;top:1385px;width:140px;height:2px;background:#4655f0;border-radius:0px;box-sizing:border-box;"></div>
<div class="t" style="left:1660.0px;top:1336.6px;height:42px;line-height:42px;font-size:30px;color:#687180;letter-spacing:1.03px;">Sales Tax</div>
<div class="t" style="left:1821.0px;top:1333.2px;height:41px;line-height:41px;font-size:29.5px;color:#000;letter-spacing:-0.89px;">10.00%</div>
<div class="r" style="left:1799.6px;top:1385px;width:138.4px;height:2px;background:#4655f0;border-radius:0px;box-sizing:border-box;"></div>
<div class="t" style="left:1970.0px;top:1336.6px;height:42px;line-height:42px;font-size:30px;color:#687180;letter-spacing:0.29px;">Price List</div>
<div class="t" style="left:2116.0px;top:1336.6px;height:42px;line-height:42px;font-size:30px;color:#000;letter-spacing:2.50px;">Main_Test</div>
<svg class="s" style="left:2284px;top:1349px;" width="26" height="15" viewBox="0 0 26 15"><polyline points="1.9,1.9 13.0,13.1 24.1,1.9" fill="none" stroke="#000" stroke-width="3.8" stroke-linecap="round" stroke-linejoin="round"/></svg>
<div class="r" style="left:2097px;top:1391px;width:236px;height:2px;background:#4655f0;border-radius:0px;box-sizing:border-box;"></div>
<div class="t" style="left:3245.6px;top:1405.5px;height:36px;line-height:36px;font-size:26px;color:#000;letter-spacing:0.76px;">Nick Gines 01/29/2025 04:26:53 PM</div>
<div class="r" style="left:276px;top:1456px;width:941px;height:72px;background:#cde0d9;border:2px solid #a9adb0;border-bottom:none;border-radius:26px 0 0 0;box-sizing:border-box;"></div>
<div class="r" style="left:795.5px;top:1458px;width:2px;height:70px;background:#a9adb0;border-radius:0px;box-sizing:border-box;"></div>
<div class="r" style="left:300px;top:1460px;width:462px;height:60px;overflow:hidden;">
<div class="t" style="left:13.4px;top:12.0px;height:36px;line-height:36px;font-size:26px;color:#000;letter-spacing:1.83px;">Visit 1 - 05/06/2023 - Saturday - A</div>
</div>
<svg class="s" style="left:760.6px;top:1487px;" width="24" height="13" viewBox="0 0 24 13"><polyline points="1.7,1.7 12.0,11.3 22.3,1.7" fill="none" stroke="#000" stroke-width="3.4" stroke-linecap="round" stroke-linejoin="round"/></svg>
<div class="t" style="left:832.7px;top:1472.0px;height:36px;line-height:36px;font-size:26px;color:#000;letter-spacing:-0.30px;">All</div>
<svg class="s" style="left:1180px;top:1487px;" width="24" height="13" viewBox="0 0 24 13"><polyline points="1.7,1.7 12.0,11.3 22.3,1.7" fill="none" stroke="#000" stroke-width="3.4" stroke-linecap="round" stroke-linejoin="round"/></svg>
<div class="r" style="left:1217px;top:1456px;width:1651px;height:70px;background:#cde0d9;border:2px solid #a9adb0;border-radius:10px;box-sizing:border-box;"></div>
<div class="r" style="left:1287px;top:1468px;width:1560px;height:46px;background:#d2e3dd;border-radius:0px;box-sizing:border-box;"></div>
<svg class="s" style="left:1236px;top:1476px;" width="34" height="32" viewBox="0 0 34 32"><circle cx="13" cy="13" r="10.5" fill="none" stroke="#0c0e32" stroke-width="3.3"/><path d="M20.5 20.5 L29 29" stroke="#0c0e32" stroke-width="3.5" stroke-linecap="round"/></svg>
<div class="t" style="left:1288.5px;top:1470.6px;height:42px;line-height:42px;font-size:30px;color:#7d7f80;letter-spacing:1.49px;">Please enter service item</div>
<div class="r" style="left:2866px;top:1456px;width:361px;height:72px;background:#cde0d9;border:2px solid #a9adb0;border-left:none;border-bottom:none;border-radius:0 30px 0 0;box-sizing:border-box;"></div>
<div class="r" style="left:2946px;top:1458px;width:2px;height:70px;background:#a9adb0;border-radius:0px;box-sizing:border-box;"></div>
<div class="r" style="left:3106px;top:1458px;width:2px;height:70px;background:#a9adb0;border-radius:0px;box-sizing:border-box;"></div>
<div class="t" style="left:2960.0px;top:1471.1px;height:42px;line-height:42px;font-size:30px;color:#8c8e8f;letter-spacing:1.21px;">Rate</div>
<div class="t" style="left:3139.7px;top:1471.1px;height:42px;line-height:42px;font-size:30px;color:#8c8e8f;letter-spacing:-3.19px;">QTY</div>
<div class="r" style="left:3231px;top:1457px;width:99px;height:68px;background:#93b5a2;border-radius:10px;box-sizing:border-box;"></div>
<svg class="s" style="left:3262px;top:1472px;" width="38" height="38" viewBox="0 0 38 38"><path d="M19 3 L19 35 M3 19 L35 19" stroke="#c9dbd2" stroke-width="4"/></svg>
<div class="r" style="left:96px;top:1527px;width:3631px;height:500px;background:#fff;border:2px solid #a9adb0;border-radius:25px 25px 0 0;box-sizing:border-box;"></div>
<div class="r" style="left:98px;top:1529px;width:3627px;height:47px;background:#1b20b4;border-radius:0px;box-sizing:border-box;border-radius:23px 23px 0 0;"></div>
<div class="r" style="left:96px;top:1576px;width:3631px;height:2px;background:#a9adb0;border-radius:0px;box-sizing:border-box;"></div>
<div class="r" style="left:98px;top:1578px;width:3627px;height:48px;background:#fff;border-radius:0px;box-sizing:border-box;"></div>
<div class="r" style="left:96px;top:1626px;width:3631px;height:2px;background:#a9adb0;border-radius:0px;box-sizing:border-box;"></div>
<div class="r" style="left:98px;top:1628px;width:3627px;height:48px;background:#eff1fc;border-radius:0px;box-sizing:border-box;"></div>
<div class="r" style="left:96px;top:1676px;width:3631px;height:2px;background:#a9adb0;border-radius:0px;box-sizing:border-box;"></div>
<div class="r" style="left:98px;top:1678px;width:3627px;height:48px;background:#fff;border-radius:0px;box-sizing:border-box;"></div>
<div class="r" style="left:96px;top:1726px;width:3631px;height:2px;background:#a9adb0;border-radius:0px;box-sizing:border-box;"></div>
<div class="r" style="left:98px;top:1728px;width:3627px;height:48px;background:#eff1fc;border-radius:0px;box-sizing:border-box;"></div>
<div class="r" style="left:96px;top:1776px;width:3631px;height:2px;background:#a9adb0;border-radius:0px;box-sizing:border-box;"></div>
<div class="r" style="left:98px;top:1778px;width:3627px;height:48px;background:#fff;border-radius:0px;box-sizing:border-box;"></div>
<div class="r" style="left:96px;top:1826px;width:3631px;height:2px;background:#a9adb0;border-radius:0px;box-sizing:border-box;"></div>
<div class="r" style="left:98px;top:1828px;width:3627px;height:48px;background:#eff1fc;border-radius:0px;box-sizing:border-box;"></div>
<div class="r" style="left:96px;top:1876px;width:3631px;height:2px;background:#a9adb0;border-radius:0px;box-sizing:border-box;"></div>
<div class="r" style="left:98px;top:1878px;width:3627px;height:48px;background:#fff;border-radius:0px;box-sizing:border-box;"></div>
<div class="r" style="left:96px;top:1926px;width:3631px;height:2px;background:#a9adb0;border-radius:0px;box-sizing:border-box;"></div>
<div class="r" style="left:153.8px;top:1578px;width:2px;height:320px;background:#a9adb0;border-radius:0px;box-sizing:border-box;"></div>
<div class="r" style="left:273px;top:1578px;width:2px;height:320px;background:#a9adb0;border-radius:0px;box-sizing:border-box;"></div>
<div class="r" style="left:734px;top:1578px;width:2px;height:320px;background:#a9adb0;border-radius:0px;box-sizing:border-box;"></div>
<div class="r" style="left:794px;top:1578px;width:2px;height:320px;background:#a9adb0;border-radius:0px;box-sizing:border-box;"></div>
<div class="r" style="left:1214px;top:1578px;width:2px;height:320px;background:#a9adb0;border-radius:0px;box-sizing:border-box;"></div>
<div class="r" style="left:2866px;top:1578px;width:2px;height:320px;background:#a9adb0;border-radius:0px;box-sizing:border-box;"></div>
<div class="r" style="left:2946px;top:1578px;width:2px;height:320px;background:#a9adb0;border-radius:0px;box-sizing:border-box;"></div>
<div class="r" style="left:3106px;top:1578px;width:2px;height:320px;background:#a9adb0;border-radius:0px;box-sizing:border-box;"></div>
<div class="r" style="left:3225.4px;top:1578px;width:2px;height:320px;background:#a9adb0;border-radius:0px;box-sizing:border-box;"></div>
<div class="r" style="left:3406px;top:1578px;width:2px;height:320px;background:#a9adb0;border-radius:0px;box-sizing:border-box;"></div>
<div class="r" style="left:3566.3px;top:1578px;width:2px;height:320px;background:#a9adb0;border-radius:0px;box-sizing:border-box;"></div>
<svg class="s" style="left:114px;top:1537px;" width="27" height="29" viewBox="0 0 27 29"><path d="M9.5 1 Q9.5 0 10.5 0 L16.5 0 Q17.5 0 17.5 1 L17.5 2.5 L26 2.5 Q27 2.5 27 3.5 L27 5 Q27 6 26 6 L1 6 Q0 6 0 5 L0 3.5 Q0 2.5 1 2.5 L9.5 2.5 Z" fill="#7d7f80"/><path d="M1.5 8 L25.5 8 L24 26.5 Q23.8 29 21 29 L6 29 Q3.2 29 3 26.5 Z" fill="#7d7f80"/></svg>
<svg class="s" style="left:204px;top:1537px;" width="32" height="30" viewBox="0 0 32 30"><path d="M5 1 L5 23" stroke="#fff" stroke-width="3"/><path d="M0 20 L5 28 L10 20 Z" fill="#fff"/><text x="14" y="12" font-family="Liberation Sans" font-size="12" font-weight="700" fill="#fff">A</text><text x="14" y="28" font-family="Liberation Sans" font-size="13" font-weight="700" fill="#fff">Z</text></svg>
<div class="t" style="left:484.8px;top:1530.3px;height:42px;line-height:42px;font-size:30px;color:#fff;letter-spacing:0.93px;">Visits</div>
<svg class="s" style="left:569px;top:1540px;" width="20" height="26" viewBox="0 0 20 26"><path d="M10.0 0.5 L19.5 10.92 L0.5 10.92 Z M0.5 15.079999999999998 L19.5 15.079999999999998 L10.0 25.5 Z" fill="#fff" stroke="#fff" stroke-width="1" stroke-linejoin="round"/></svg>
<div class="t" style="left:874.7px;top:1530.3px;height:42px;line-height:42px;font-size:30px;color:#fff;letter-spacing:1.72px;">Affected Rooms</div>
<svg class="s" style="left:1119.6px;top:1540px;" width="20" height="26" viewBox="0 0 20 26"><path d="M10.0 0.5 L19.5 10.92 L0.5 10.92 Z M0.5 15.079999999999998 L19.5 15.079999999999998 L10.0 25.5 Z" fill="#fff" stroke="#fff" stroke-width="1" stroke-linejoin="round"/></svg>
<div class="t" style="left:1943.4px;top:1530.3px;height:42px;line-height:42px;font-size:30px;color:#fff;letter-spacing:1.85px;">Description</div>
<svg class="s" style="left:2122px;top:1540px;" width="20" height="26" viewBox="0 0 20 26"><path d="M10.0 0.5 L19.5 10.92 L0.5 10.92 Z M0.5 15.079999999999998 L19.5 15.079999999999998 L10.0 25.5 Z" fill="#fff" stroke="#fff" stroke-width="1" stroke-linejoin="round"/></svg>
<div class="t" style="left:2871.0px;top:1530.3px;height:42px;line-height:42px;font-size:30px;color:#fff;letter-spacing:1.04px;">Units</div>
<div class="t" style="left:2994.6px;top:1530.3px;height:42px;line-height:42px;font-size:30px;color:#fff;letter-spacing:0.84px;">Rate</div>
<div class="t" style="left:3139.7px;top:1530.3px;height:42px;line-height:42px;font-size:30px;color:#fff;letter-spacing:-3.19px;">QTY</div>
<div class="r" style="left:3224px;top:1530px;width:186px;height:46px;overflow:hidden;">
<div class="t" style="left:0.0px;top:0.3px;height:42px;line-height:42px;font-size:30px;color:#fff;letter-spacing:1.99px;">Taxable/Unit</div>
</div>
<div class="t" style="left:3419.0px;top:1530.3px;height:42px;line-height:42px;font-size:30px;color:#fff;letter-spacing:1.00px;">Sales Tax</div>
<div class="t" style="left:3597.7px;top:1530.3px;height:42px;line-height:42px;font-size:30px;color:#fff;letter-spacing:1.98px;">Total</div>
<svg class="s" style="left:3677px;top:1540px;" width="20" height="26" viewBox="0 0 20 26"><path d="M10.0 0.5 L19.5 10.92 L0.5 10.92 Z M0.5 15.079999999999998 L19.5 15.079999999999998 L10.0 25.5 Z" fill="#fff" stroke="#fff" stroke-width="1" stroke-linejoin="round"/></svg>
<div class="r" style="left:114px;top:1592px;width:24px;height:24px;background:#fff;border-radius:4px;box-sizing:border-box;border:1.5px solid #c9cbcd;"></div>
<div class="t" style="left:-785.6px;width:2000px;text-align:center;text-indent:0.60px;top:1578.0px;height:41px;line-height:41px;font-size:29px;color:#000;letter-spacing:0.60px;">A1</div>
<div class="t" style="left:-495.5px;width:2000px;text-align:center;text-indent:0.90px;top:1578.0px;height:41px;line-height:41px;font-size:29px;color:#000;letter-spacing:0.90px;">Visit 1 - 05/06/2023</div>
<div class="t" style="left:-235.0px;width:2000px;text-align:center;text-indent:0.00px;top:1578.0px;height:41px;line-height:41px;font-size:29px;color:#000;letter-spacing:0.00px;">A</div>
<div class="t" style="left:5.0px;width:2000px;text-align:center;text-indent:0.50px;top:1578.0px;height:41px;line-height:41px;font-size:29px;color:#000;letter-spacing:0.50px;">All</div>
<div class="t" style="left:1237.0px;top:1578.0px;height:41px;line-height:41px;font-size:29px;color:#000;letter-spacing:-0.21px;">Late Fee</div>
<div class="t" style="left:1907.0px;width:2000px;text-align:center;text-indent:0.30px;top:1578.0px;height:41px;line-height:41px;font-size:29px;color:#000;letter-spacing:0.30px;">EA</div>
<div class="t" style="left:2968.6px;top:1578.0px;height:41px;line-height:41px;font-size:29px;color:#000;letter-spacing:1.00px;">$0.00</div>
<div class="t" style="left:2166.7px;width:2000px;text-align:center;text-indent:0.50px;top:1578.0px;height:41px;line-height:41px;font-size:29px;color:#000;letter-spacing:0.50px;">10</div>
<div class="t" style="left:1395.5px;width:2000px;text-align:right;top:1578.0px;height:41px;line-height:41px;font-size:29px;color:#000;letter-spacing:1.00px;">$0.00</div>
<div class="t" style="left:1555.0px;width:2000px;text-align:right;top:1578.0px;height:41px;line-height:41px;font-size:29px;color:#000;letter-spacing:1.00px;">$0.00</div>
<div class="t" style="left:1715.7px;width:2000px;text-align:right;top:1578.0px;height:41px;line-height:41px;font-size:29px;color:#000;letter-spacing:1.00px;">$0.00</div>
<div class="r" style="left:114px;top:1642px;width:24px;height:24px;background:#fff;border-radius:4px;box-sizing:border-box;border:1.5px solid #c9cbcd;"></div>
<div class="t" style="left:-785.6px;width:2000px;text-align:center;text-indent:0.60px;top:1628.0px;height:41px;line-height:41px;font-size:29px;color:#000;letter-spacing:0.60px;">A102</div>
<div class="t" style="left:-495.5px;width:2000px;text-align:center;text-indent:0.90px;top:1628.0px;height:41px;line-height:41px;font-size:29px;color:#000;letter-spacing:0.90px;">Visit 4 - 05/09/2023</div>
<div class="t" style="left:-235.0px;width:2000px;text-align:center;text-indent:0.00px;top:1628.0px;height:41px;line-height:41px;font-size:29px;color:#000;letter-spacing:0.00px;">N</div>
<div class="t" style="left:5.0px;width:2000px;text-align:center;text-indent:0.50px;top:1628.0px;height:41px;line-height:41px;font-size:29px;color:#000;letter-spacing:0.50px;">All</div>
<div class="t" style="left:1237.0px;top:1628.0px;height:41px;line-height:41px;font-size:29px;color:#000;letter-spacing:1.32px;">Equipment setup, take down, and monitoring (hourly charge)</div>
<div class="t" style="left:1907.0px;width:2000px;text-align:center;text-indent:0.30px;top:1628.0px;height:41px;line-height:41px;font-size:29px;color:#000;letter-spacing:0.30px;">HR</div>
<div class="t" style="left:2968.6px;top:1628.0px;height:41px;line-height:41px;font-size:29px;color:#000;letter-spacing:1.00px;">$85.48</div>
<div class="t" style="left:2166.7px;width:2000px;text-align:center;text-indent:0.50px;top:1628.0px;height:41px;line-height:41px;font-size:29px;color:#000;letter-spacing:0.50px;">29</div>
<div class="t" style="left:1395.5px;width:2000px;text-align:right;top:1628.0px;height:41px;line-height:41px;font-size:29px;color:#000;letter-spacing:1.00px;">$0.00</div>
<div class="t" style="left:1555.0px;width:2000px;text-align:right;top:1628.0px;height:41px;line-height:41px;font-size:29px;color:#000;letter-spacing:1.00px;">$0.00</div>
<div class="t" style="left:1715.7px;width:2000px;text-align:right;top:1628.0px;height:41px;line-height:41px;font-size:29px;color:#000;letter-spacing:1.00px;">$2,478.92</div>
<div class="r" style="left:114px;top:1692px;width:24px;height:24px;background:#fff;border-radius:4px;box-sizing:border-box;border:1.5px solid #c9cbcd;"></div>
<div class="t" style="left:-785.6px;width:2000px;text-align:center;text-indent:0.60px;top:1678.0px;height:41px;line-height:41px;font-size:29px;color:#000;letter-spacing:0.60px;">A103</div>
<div class="t" style="left:-495.5px;width:2000px;text-align:center;text-indent:0.90px;top:1678.0px;height:41px;line-height:41px;font-size:29px;color:#000;letter-spacing:0.90px;">Visit 4 - 05/09/2023</div>
<div class="t" style="left:-235.0px;width:2000px;text-align:center;text-indent:0.00px;top:1678.0px;height:41px;line-height:41px;font-size:29px;color:#000;letter-spacing:0.00px;">N</div>
<div class="t" style="left:5.0px;width:2000px;text-align:center;text-indent:0.50px;top:1678.0px;height:41px;line-height:41px;font-size:29px;color:#000;letter-spacing:0.50px;">All</div>
<div class="t" style="left:1237.0px;top:1678.0px;height:41px;line-height:41px;font-size:29px;color:#000;letter-spacing:1.09px;">Equip. setup, take down &amp; monitoring - after hrs</div>
<div class="t" style="left:1907.0px;width:2000px;text-align:center;text-indent:0.30px;top:1678.0px;height:41px;line-height:41px;font-size:29px;color:#000;letter-spacing:0.30px;">HR</div>
<div class="t" style="left:2968.6px;top:1678.0px;height:41px;line-height:41px;font-size:29px;color:#000;letter-spacing:1.00px;">$111.92</div>
<div class="t" style="left:2166.7px;width:2000px;text-align:center;text-indent:0.50px;top:1678.0px;height:41px;line-height:41px;font-size:29px;color:#000;letter-spacing:0.50px;">4.5</div>
<div class="t" style="left:1395.5px;width:2000px;text-align:right;top:1678.0px;height:41px;line-height:41px;font-size:29px;color:#000;letter-spacing:1.00px;">$0.00</div>
<div class="t" style="left:1555.0px;width:2000px;text-align:right;top:1678.0px;height:41px;line-height:41px;font-size:29px;color:#000;letter-spacing:1.00px;">$0.00</div>
<div class="t" style="left:1715.7px;width:2000px;text-align:right;top:1678.0px;height:41px;line-height:41px;font-size:29px;color:#000;letter-spacing:1.00px;">$503.64</div>
<div class="r" style="left:114px;top:1742px;width:24px;height:24px;background:#fff;border-radius:4px;box-sizing:border-box;border:1.5px solid #c9cbcd;"></div>
<div class="t" style="left:-785.6px;width:2000px;text-align:center;text-indent:0.60px;top:1728.0px;height:41px;line-height:41px;font-size:29px;color:#000;letter-spacing:0.60px;">B101</div>
<div class="t" style="left:-495.5px;width:2000px;text-align:center;text-indent:0.90px;top:1728.0px;height:41px;line-height:41px;font-size:29px;color:#000;letter-spacing:0.90px;">Visit 1 - 05/06/2023</div>
<div class="t" style="left:-235.0px;width:2000px;text-align:center;text-indent:0.00px;top:1728.0px;height:41px;line-height:41px;font-size:29px;color:#000;letter-spacing:0.00px;">A</div>
<div class="t" style="left:5.0px;width:2000px;text-align:center;text-indent:0.50px;top:1728.0px;height:41px;line-height:41px;font-size:29px;color:#000;letter-spacing:0.50px;">All</div>
<div class="t" style="left:1237.0px;top:1728.0px;height:41px;line-height:41px;font-size:29px;color:#000;letter-spacing:0.77px;">Fuel - Work Vehicles</div>
<div class="t" style="left:1907.0px;width:2000px;text-align:center;text-indent:0.30px;top:1728.0px;height:41px;line-height:41px;font-size:29px;color:#000;letter-spacing:0.30px;">EA</div>
<div class="t" style="left:2968.6px;top:1728.0px;height:41px;line-height:41px;font-size:29px;color:#000;letter-spacing:1.00px;">$185.00</div>
<div class="t" style="left:2166.7px;width:2000px;text-align:center;text-indent:0.50px;top:1728.0px;height:41px;line-height:41px;font-size:29px;color:#000;letter-spacing:0.50px;">2</div>
<div class="t" style="left:1395.5px;width:2000px;text-align:right;top:1728.0px;height:41px;line-height:41px;font-size:29px;color:#000;letter-spacing:1.00px;">$0.00</div>
<div class="t" style="left:1555.0px;width:2000px;text-align:right;top:1728.0px;height:41px;line-height:41px;font-size:29px;color:#000;letter-spacing:1.00px;">$0.00</div>
<div class="t" style="left:1715.7px;width:2000px;text-align:right;top:1728.0px;height:41px;line-height:41px;font-size:29px;color:#000;letter-spacing:1.00px;">$370.00</div>
<div class="r" style="left:114px;top:1792px;width:24px;height:24px;background:#fff;border-radius:4px;box-sizing:border-box;border:1.5px solid #c9cbcd;"></div>
<div class="t" style="left:-785.6px;width:2000px;text-align:center;text-indent:0.60px;top:1778.0px;height:41px;line-height:41px;font-size:29px;color:#000;letter-spacing:0.60px;">C113</div>
<div class="t" style="left:-495.5px;width:2000px;text-align:center;text-indent:0.90px;top:1778.0px;height:41px;line-height:41px;font-size:29px;color:#000;letter-spacing:0.90px;">Visit 1 - 05/06/2023</div>
<div class="t" style="left:-235.0px;width:2000px;text-align:center;text-indent:0.00px;top:1778.0px;height:41px;line-height:41px;font-size:29px;color:#000;letter-spacing:0.00px;">A</div>
<div class="t" style="left:5.0px;width:2000px;text-align:center;text-indent:0.50px;top:1778.0px;height:41px;line-height:41px;font-size:29px;color:#000;letter-spacing:0.50px;">All</div>
<div class="t" style="left:1237.0px;top:1778.0px;height:41px;line-height:41px;font-size:29px;color:#000;letter-spacing:0.68px;">Booties</div>
<div class="t" style="left:1907.0px;width:2000px;text-align:center;text-indent:0.30px;top:1778.0px;height:41px;line-height:41px;font-size:29px;color:#000;letter-spacing:0.30px;">EA</div>
<div class="t" style="left:2968.6px;top:1778.0px;height:41px;line-height:41px;font-size:29px;color:#000;letter-spacing:1.00px;">$10.48</div>
<div class="t" style="left:2166.7px;width:2000px;text-align:center;text-indent:0.50px;top:1778.0px;height:41px;line-height:41px;font-size:29px;color:#000;letter-spacing:0.50px;">2</div>
<div class="t" style="left:1395.5px;width:2000px;text-align:right;top:1778.0px;height:41px;line-height:41px;font-size:29px;color:#000;letter-spacing:1.00px;">$10.43</div>
<div class="t" style="left:1555.0px;width:2000px;text-align:right;top:1778.0px;height:41px;line-height:41px;font-size:29px;color:#000;letter-spacing:1.00px;">$2.09</div>
<div class="t" style="left:1715.7px;width:2000px;text-align:right;top:1778.0px;height:41px;line-height:41px;font-size:29px;color:#000;letter-spacing:1.00px;">$23.05</div>
<div class="r" style="left:114px;top:1842px;width:24px;height:24px;background:#fff;border-radius:4px;box-sizing:border-box;border:1.5px solid #c9cbcd;"></div>
<div class="t" style="left:-785.6px;width:2000px;text-align:center;text-indent:0.60px;top:1828.0px;height:41px;line-height:41px;font-size:29px;color:#000;letter-spacing:0.60px;">G101</div>
<div class="t" style="left:-495.5px;width:2000px;text-align:center;text-indent:0.90px;top:1828.0px;height:41px;line-height:41px;font-size:29px;color:#000;letter-spacing:0.90px;">Visit 4 - 05/09/2023</div>
<div class="t" style="left:-235.0px;width:2000px;text-align:center;text-indent:0.00px;top:1828.0px;height:41px;line-height:41px;font-size:29px;color:#000;letter-spacing:0.00px;">N</div>
<div class="t" style="left:5.0px;width:2000px;text-align:center;text-indent:0.50px;top:1828.0px;height:41px;line-height:41px;font-size:29px;color:#000;letter-spacing:0.50px;">All</div>
<div class="t" style="left:1237.0px;top:1828.0px;height:41px;line-height:41px;font-size:29px;color:#000;letter-spacing:1.26px;">Mini air mover (per 24 hour period) - No monitoring</div>
<div class="t" style="left:1907.0px;width:2000px;text-align:center;text-indent:0.30px;top:1828.0px;height:41px;line-height:41px;font-size:29px;color:#000;letter-spacing:0.30px;">DA</div>
<div class="t" style="left:2968.6px;top:1828.0px;height:41px;line-height:41px;font-size:29px;color:#000;letter-spacing:1.00px;">$10.78</div>
<div class="t" style="left:2166.7px;width:2000px;text-align:center;text-indent:0.50px;top:1828.0px;height:41px;line-height:41px;font-size:29px;color:#000;letter-spacing:0.50px;">3</div>
<div class="t" style="left:1395.5px;width:2000px;text-align:right;top:1828.0px;height:41px;line-height:41px;font-size:29px;color:#000;letter-spacing:1.00px;">$0.00</div>
<div class="t" style="left:1555.0px;width:2000px;text-align:right;top:1828.0px;height:41px;line-height:41px;font-size:29px;color:#000;letter-spacing:1.00px;">$0.00</div>
<div class="t" style="left:1715.7px;width:2000px;text-align:right;top:1828.0px;height:41px;line-height:41px;font-size:29px;color:#000;letter-spacing:1.00px;">$32.34</div>
<div class="r" style="left:114px;top:1892px;width:24px;height:24px;background:#fff;border-radius:4px;box-sizing:border-box;border:1.5px solid #c9cbcd;"></div>
<div class="t" style="left:-785.6px;width:2000px;text-align:center;text-indent:0.60px;top:1878.0px;height:41px;line-height:41px;font-size:29px;color:#000;letter-spacing:0.60px;">A104</div>
<div class="t" style="left:-495.5px;width:2000px;text-align:center;text-indent:0.90px;top:1878.0px;height:41px;line-height:41px;font-size:29px;color:#000;letter-spacing:0.90px;">Visit 1 - 05/06/2023</div>
<div class="t" style="left:-235.0px;width:2000px;text-align:center;text-indent:0.00px;top:1878.0px;height:41px;line-height:41px;font-size:29px;color:#000;letter-spacing:0.00px;">A</div>
<div class="t" style="left:5.0px;width:2000px;text-align:center;text-indent:0.50px;top:1878.0px;height:41px;line-height:41px;font-size:29px;color:#000;letter-spacing:0.50px;">All</div>
<div class="t" style="left:1237.0px;top:1878.0px;height:41px;line-height:41px;font-size:29px;color:#000;letter-spacing:0.12px;">Equipment decontamination charge</div>
<div class="t" style="left:1907.0px;width:2000px;text-align:center;text-indent:0.30px;top:1878.0px;height:41px;line-height:41px;font-size:29px;color:#000;letter-spacing:0.30px;">EA</div>
<div class="t" style="left:2968.6px;top:1878.0px;height:41px;line-height:41px;font-size:29px;color:#000;letter-spacing:1.00px;">$0.00</div>
<div class="t" style="left:2166.7px;width:2000px;text-align:center;text-indent:0.50px;top:1878.0px;height:41px;line-height:41px;font-size:29px;color:#000;letter-spacing:0.50px;">1</div>
<div class="t" style="left:1395.5px;width:2000px;text-align:right;top:1878.0px;height:41px;line-height:41px;font-size:29px;color:#000;letter-spacing:1.00px;">$0.00</div>
<div class="t" style="left:1555.0px;width:2000px;text-align:right;top:1878.0px;height:41px;line-height:41px;font-size:29px;color:#000;letter-spacing:1.00px;">$0.00</div>
<div class="t" style="left:1715.7px;width:2000px;text-align:right;top:1878.0px;height:41px;line-height:41px;font-size:29px;color:#000;letter-spacing:1.00px;">$0.00</div>
</body></html>
